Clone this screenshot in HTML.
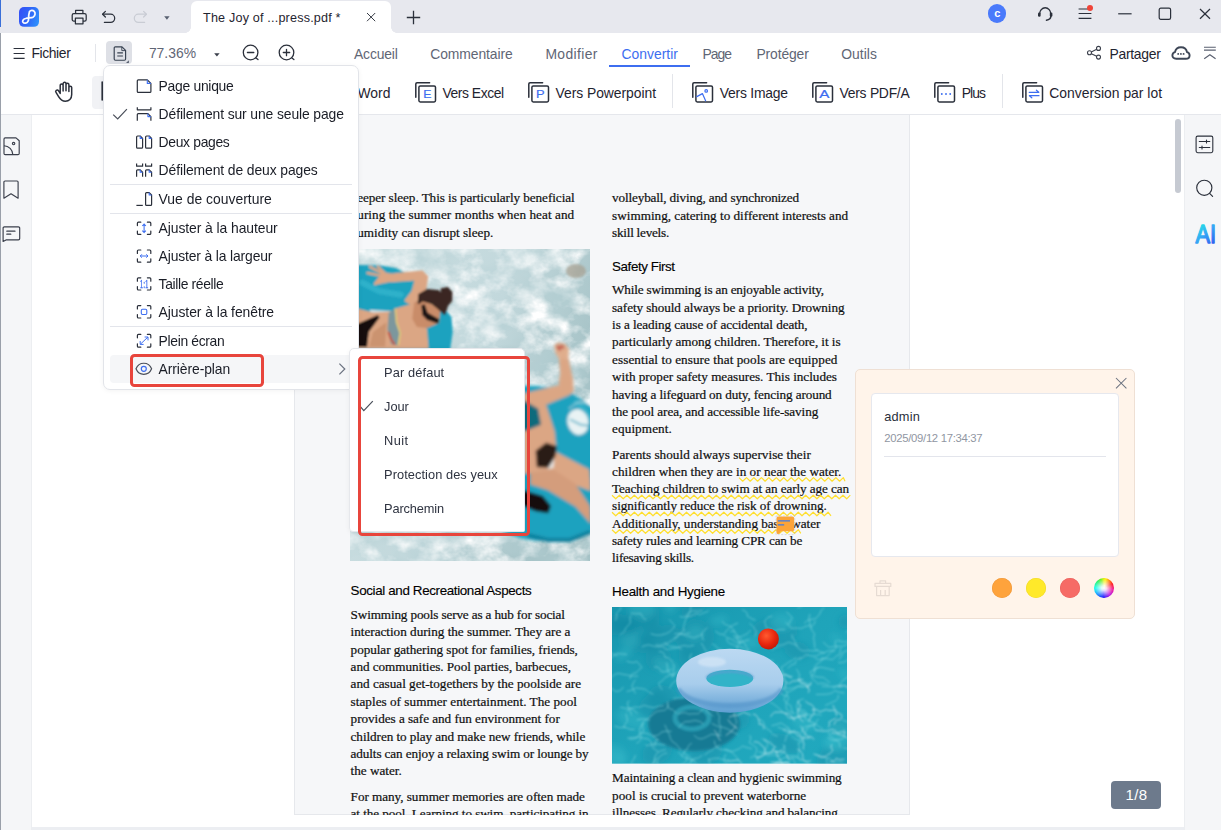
<!DOCTYPE html>
<html lang="fr"><head><meta charset="utf-8"><title>PDFelement</title>
<style>
*{box-sizing:border-box}
html,body{margin:0;padding:0}
body{width:1221px;height:832px;position:relative;overflow:hidden;background:#fff;font-family:"Liberation Sans",sans-serif}
.a{position:absolute}
.t{position:absolute;white-space:nowrap;display:block}
svg{position:absolute;overflow:visible}
.ic{fill:none;stroke:#2a2f3a;stroke-width:1.3;stroke-linecap:round;stroke-linejoin:round}
.sep{position:absolute;width:1px;background:#e3e5ea}
.mi{position:absolute;left:0;width:100%;height:28px}
.hr{position:absolute;left:7px;right:7px;height:1px;background:#e3e5eb}
</style></head>
<body>

<div class="a" id="titlebar" style="left:0;top:0;width:1221px;height:33px;background:#e7e8ee"></div>
<div class="a" style="left:0;top:0;width:1.4px;height:27px;background:#3a6fd8"></div>
<div class="a" id="tab" style="left:191px;top:0.7px;width:200px;height:32.3px;background:#fff;border-radius:6px 6px 0 0"></div>
<div class="a" style="left:185px;top:27px;width:6px;height:6px;background:radial-gradient(circle at 0 0,rgba(255,255,255,0) 5.6px,#fff 6.1px)"></div>
<div class="a" style="left:391px;top:27px;width:6px;height:6px;background:radial-gradient(circle at 100% 0,rgba(255,255,255,0) 5.6px,#fff 6.1px)"></div>
<span class="t" id="t0" style="left:203.0px;top:12.01px;font:400 12.6px/1 'Liberation Sans', sans-serif;color:#1f2430;letter-spacing:0.188px;">The Joy of ...press.pdf *</span>


<div class="a" id="menurow" style="left:0;top:33px;width:1221px;height:82px;background:#fff;border-bottom:1px solid #e5e7ec"></div>
<span class="t" id="t1" style="left:31.4px;top:47.01px;font:400 13.9px/1 'Liberation Sans', sans-serif;color:#1f2430;letter-spacing:-0.381px;">Fichier</span>
<div class="sep" style="left:95px;top:44px;height:18px"></div>
<div class="a" style="left:106px;top:41px;width:26px;height:23.4px;background:#dee0e6;border-radius:4px"></div>
<span class="t" id="t2" style="left:148.9px;top:47.01px;font:400 13.9px/1 'Liberation Sans', sans-serif;color:#5f6675;letter-spacing:-0.005px;">77.36%</span>
<span class="t" id="t3" style="left:354.0px;top:48.01px;font:400 13.9px/1 'Liberation Sans', sans-serif;color:#5f6675;letter-spacing:-0.164px;">Accueil</span>
<span class="t" id="t4" style="left:430.2px;top:48.01px;font:400 13.9px/1 'Liberation Sans', sans-serif;color:#5f6675;letter-spacing:-0.078px;">Commentaire</span>
<span class="t" id="t5" style="left:545.4px;top:48.01px;font:400 13.9px/1 'Liberation Sans', sans-serif;color:#5f6675;letter-spacing:0.385px;">Modifier</span>
<span class="t" id="t6" style="left:621.6px;top:48.01px;font:400 13.9px/1 'Liberation Sans', sans-serif;color:#3d6ef0;letter-spacing:-0.007px;">Convertir</span>
<div class="a" style="left:609px;top:65px;width:81px;height:2px;background:#3d6ef0"></div>
<span class="t" id="t7" style="left:702.5px;top:48.01px;font:400 13.9px/1 'Liberation Sans', sans-serif;color:#5f6675;letter-spacing:-0.984px;">Page</span>
<span class="t" id="t8" style="left:756.5px;top:48.01px;font:400 13.9px/1 'Liberation Sans', sans-serif;color:#5f6675;letter-spacing:-0.140px;">Protéger</span>
<span class="t" id="t9" style="left:841.3px;top:48.01px;font:400 13.9px/1 'Liberation Sans', sans-serif;color:#5f6675;letter-spacing:0.017px;">Outils</span>
<span class="t" id="t10" style="left:1109.5px;top:48.01px;font:400 13.9px/1 'Liberation Sans', sans-serif;color:#1f2430;letter-spacing:-0.283px;">Partager</span>


<div class="a" style="left:92px;top:76px;width:34px;height:33px;background:#f1f2f5;border-radius:4px"></div>
<span class="t" id="t11" style="left:325.5px;top:87.01px;font:400 13.9px/1 'Liberation Sans', sans-serif;color:#1f2430;letter-spacing:0.051px;">Vers Word</span>
<span class="t" id="t12" style="left:442.5px;top:87.01px;font:400 13.9px/1 'Liberation Sans', sans-serif;color:#1f2430;letter-spacing:-0.458px;">Vers Excel</span>
<span class="t" id="t13" style="left:555.5px;top:87.01px;font:400 13.9px/1 'Liberation Sans', sans-serif;color:#1f2430;letter-spacing:-0.047px;">Vers Powerpoint</span>
<div class="sep" style="left:672px;top:74px;height:34px"></div>
<span class="t" id="t14" style="left:719.7px;top:87.01px;font:400 13.9px/1 'Liberation Sans', sans-serif;color:#1f2430;letter-spacing:-0.218px;">Vers Image</span>
<span class="t" id="t15" style="left:839.6px;top:87.01px;font:400 13.9px/1 'Liberation Sans', sans-serif;color:#1f2430;letter-spacing:-0.274px;">Vers PDF/A</span>
<span class="t" id="t16" style="left:961.8px;top:87.01px;font:400 13.9px/1 'Liberation Sans', sans-serif;color:#1f2430;letter-spacing:-0.944px;">Plus</span>
<div class="sep" style="left:1002px;top:74px;height:34px"></div>
<span class="t" id="t17" style="left:1049.3px;top:87.01px;font:400 13.9px/1 'Liberation Sans', sans-serif;color:#1f2430;letter-spacing:-0.002px;">Conversion par lot</span>


<div class="a" id="leftbar" style="left:0;top:115px;width:32px;height:717px;background:#f5f6f8;border-right:1px solid #eceef1"></div>
<div class="a" style="left:0;top:33px;width:1px;height:799px;background:#9aa0aa"></div>
<div class="a" id="rightbar" style="left:1184px;top:115px;width:37px;height:717px;background:#f5f6f8;border-left:1px solid #eceef1"></div>
<div class="a" id="bottomstrip" style="left:32px;top:827px;width:1152px;height:5px;background:#eceef2"></div>
<div class="a" style="left:0;top:829.7px;width:1221px;height:2.3px;background:#fff"></div>
<div class="a" id="page" style="left:294px;top:115px;width:616px;height:700px;background:#f6f7f9;border:1px solid #e6e8ec;border-top:none"></div>
<div class="a" id="scroll" style="left:1175px;top:119px;width:6px;height:74px;background:#c6cad2;border-radius:3px"></div>
<div class="a" id="pgind" style="left:1111px;top:781px;width:50px;height:28px;background:#6d7a8c;border-radius:4px"></div>
<span class="t" id="t18" style="left:1125.6px;top:787.41px;font:400 15px/1 'Liberation Sans', sans-serif;color:#fff;letter-spacing:0.320px;">1/8</span>

<div class="a" id="pdfclip" style="left:294px;top:115px;width:616px;height:699.6px;overflow:hidden"><div class="a" style="left:-294px;top:-115px;width:1221px;height:832px">
<span class="t" id="t19" style="left:350.6px;top:190.61px;font:400 13.2px/1 'Liberation Serif', serif;color:#111;letter-spacing:-0.061px;-webkit-text-stroke:0.22px #111;">deeper sleep. This is particularly beneficial</span>
<span class="t" id="t20" style="left:350.6px;top:208.01px;font:400 13.2px/1 'Liberation Serif', serif;color:#111;letter-spacing:0.064px;-webkit-text-stroke:0.22px #111;">during the summer months when heat and</span>
<span class="t" id="t21" style="left:350.6px;top:225.72px;font:400 13.2px/1 'Liberation Serif', serif;color:#111;letter-spacing:-0.006px;-webkit-text-stroke:0.22px #111;">humidity can disrupt sleep.</span>
<span class="t" id="t22" style="left:350.6px;top:584.11px;font:400 13.4px/1 'Liberation Sans', sans-serif;color:#000;letter-spacing:-0.365px;-webkit-text-stroke:0.12px #000;">Social and Recreational Aspects</span>
<span class="t" id="t23" style="left:350.6px;top:608.01px;font:400 13.2px/1 'Liberation Serif', serif;color:#111;letter-spacing:-0.147px;-webkit-text-stroke:0.22px #111;">Swimming pools serve as a hub for social</span>
<span class="t" id="t24" style="left:350.6px;top:625.29px;font:400 13.2px/1 'Liberation Serif', serif;color:#111;letter-spacing:-0.019px;-webkit-text-stroke:0.22px #111;">interaction during the summer. They are a</span>
<span class="t" id="t25" style="left:350.6px;top:642.70px;font:400 13.2px/1 'Liberation Serif', serif;color:#111;letter-spacing:-0.053px;-webkit-text-stroke:0.22px #111;">popular gathering spot for families, friends,</span>
<span class="t" id="t26" style="left:350.6px;top:659.90px;font:400 13.2px/1 'Liberation Serif', serif;color:#111;letter-spacing:-0.048px;-webkit-text-stroke:0.22px #111;">and communities. Pool parties, barbecues,</span>
<span class="t" id="t27" style="left:350.6px;top:677.20px;font:400 13.2px/1 'Liberation Serif', serif;color:#111;letter-spacing:-0.007px;-webkit-text-stroke:0.22px #111;">and casual get-togethers by the poolside are</span>
<span class="t" id="t28" style="left:350.6px;top:694.60px;font:400 13.2px/1 'Liberation Serif', serif;color:#111;letter-spacing:0.026px;-webkit-text-stroke:0.22px #111;">staples of summer entertainment. The pool</span>
<span class="t" id="t29" style="left:350.6px;top:712.01px;font:400 13.2px/1 'Liberation Serif', serif;color:#111;letter-spacing:-0.046px;-webkit-text-stroke:0.22px #111;">provides a safe and fun environment for</span>
<span class="t" id="t30" style="left:350.6px;top:729.51px;font:400 13.2px/1 'Liberation Serif', serif;color:#111;letter-spacing:-0.078px;-webkit-text-stroke:0.22px #111;">children to play and make new friends, while</span>
<span class="t" id="t31" style="left:350.6px;top:746.90px;font:400 13.2px/1 'Liberation Serif', serif;color:#111;letter-spacing:-0.116px;-webkit-text-stroke:0.22px #111;">adults can enjoy a relaxing swim or lounge by</span>
<span class="t" id="t32" style="left:350.6px;top:764.01px;font:400 13.2px/1 'Liberation Serif', serif;color:#111;letter-spacing:-0.007px;-webkit-text-stroke:0.22px #111;">the water.</span>
<span class="t" id="t33" style="left:350.6px;top:789.51px;font:400 13.2px/1 'Liberation Serif', serif;color:#111;letter-spacing:-0.046px;-webkit-text-stroke:0.22px #111;">For many, summer memories are often made</span>
<span class="t" id="t34" style="left:350.6px;top:806.70px;font:400 13.2px/1 'Liberation Serif', serif;color:#111;letter-spacing:-0.087px;-webkit-text-stroke:0.22px #111;">at the pool. Learning to swim, participating in</span>
<span class="t" id="t35" style="left:612.1px;top:191.01px;font:400 13.2px/1 'Liberation Serif', serif;color:#111;letter-spacing:-0.151px;-webkit-text-stroke:0.22px #111;">volleyball, diving, and synchronized</span>
<span class="t" id="t36" style="left:612.1px;top:208.51px;font:400 13.2px/1 'Liberation Serif', serif;color:#111;letter-spacing:-0.008px;-webkit-text-stroke:0.22px #111;">swimming, catering to different interests and</span>
<span class="t" id="t37" style="left:612.1px;top:225.72px;font:400 13.2px/1 'Liberation Serif', serif;color:#111;letter-spacing:-0.248px;-webkit-text-stroke:0.22px #111;">skill levels.</span>
<span class="t" id="t38" style="left:612.1px;top:259.80px;font:400 13.4px/1 'Liberation Sans', sans-serif;color:#000;letter-spacing:-0.438px;-webkit-text-stroke:0.12px #000;">Safety First</span>
<span class="t" id="t39" style="left:612.1px;top:282.60px;font:400 13.2px/1 'Liberation Serif', serif;color:#111;letter-spacing:-0.179px;-webkit-text-stroke:0.22px #111;">While swimming is an enjoyable activity,</span>
<span class="t" id="t40" style="left:612.1px;top:300.51px;font:400 13.2px/1 'Liberation Serif', serif;color:#111;letter-spacing:-0.103px;-webkit-text-stroke:0.22px #111;">safety should always be a priority. Drowning</span>
<span class="t" id="t41" style="left:612.1px;top:318.01px;font:400 13.2px/1 'Liberation Serif', serif;color:#111;letter-spacing:-0.088px;-webkit-text-stroke:0.22px #111;">is a leading cause of accidental death,</span>
<span class="t" id="t42" style="left:612.1px;top:335.30px;font:400 13.2px/1 'Liberation Serif', serif;color:#111;letter-spacing:-0.053px;-webkit-text-stroke:0.22px #111;">particularly among children. Therefore, it is</span>
<span class="t" id="t43" style="left:612.1px;top:352.80px;font:400 13.2px/1 'Liberation Serif', serif;color:#111;letter-spacing:0.063px;-webkit-text-stroke:0.22px #111;">essential to ensure that pools are equipped</span>
<span class="t" id="t44" style="left:612.1px;top:370.30px;font:400 13.2px/1 'Liberation Serif', serif;color:#111;letter-spacing:-0.011px;-webkit-text-stroke:0.22px #111;">with proper safety measures. This includes</span>
<span class="t" id="t45" style="left:612.1px;top:387.60px;font:400 13.2px/1 'Liberation Serif', serif;color:#111;letter-spacing:-0.116px;-webkit-text-stroke:0.22px #111;">having a lifeguard on duty, fencing around</span>
<span class="t" id="t46" style="left:612.1px;top:405.01px;font:400 13.2px/1 'Liberation Serif', serif;color:#111;letter-spacing:-0.100px;-webkit-text-stroke:0.22px #111;">the pool area, and accessible life-saving</span>
<span class="t" id="t47" style="left:612.1px;top:422.22px;font:400 13.2px/1 'Liberation Serif', serif;color:#111;letter-spacing:0.081px;-webkit-text-stroke:0.22px #111;">equipment.</span>
<span class="t" id="t48" style="left:612.1px;top:447.60px;font:400 13.2px/1 'Liberation Serif', serif;color:#111;letter-spacing:0.026px;-webkit-text-stroke:0.22px #111;">Parents should always supervise their</span>
<span class="t" id="t49" style="left:612.1px;top:465.01px;font:400 13.2px/1 'Liberation Serif', serif;color:#111;letter-spacing:0.008px;-webkit-text-stroke:0.22px #111;">children when they are in or near the water.</span>
<span class="t" id="t50" style="left:612.1px;top:482.22px;font:400 13.2px/1 'Liberation Serif', serif;color:#111;letter-spacing:-0.104px;-webkit-text-stroke:0.22px #111;">Teaching children to swim at an early age can</span>
<span class="t" id="t51" style="left:612.1px;top:499.42px;font:400 13.2px/1 'Liberation Serif', serif;color:#111;letter-spacing:-0.087px;-webkit-text-stroke:0.22px #111;">significantly reduce the risk of drowning.</span>
<span class="t" id="t52" style="left:612.1px;top:516.70px;font:400 13.2px/1 'Liberation Serif', serif;color:#111;letter-spacing:-0.047px;-webkit-text-stroke:0.22px #111;">Additionally, understanding basic water</span>
<span class="t" id="t53" style="left:612.1px;top:534.10px;font:400 13.2px/1 'Liberation Serif', serif;color:#111;letter-spacing:-0.132px;-webkit-text-stroke:0.22px #111;">safety rules and learning CPR can be</span>
<span class="t" id="t54" style="left:612.1px;top:551.29px;font:400 13.2px/1 'Liberation Serif', serif;color:#111;letter-spacing:-0.262px;-webkit-text-stroke:0.22px #111;">lifesaving skills.</span>
<span class="t" id="t55" style="left:612.1px;top:585.30px;font:400 13.4px/1 'Liberation Sans', sans-serif;color:#000;letter-spacing:-0.266px;-webkit-text-stroke:0.12px #000;">Health and Hygiene</span>
<span class="t" id="t56" style="left:612.1px;top:771.40px;font:400 13.2px/1 'Liberation Serif', serif;color:#111;letter-spacing:-0.129px;-webkit-text-stroke:0.22px #111;">Maintaining a clean and hygienic swimming</span>
<span class="t" id="t57" style="left:612.1px;top:788.79px;font:400 13.2px/1 'Liberation Serif', serif;color:#111;letter-spacing:0.008px;-webkit-text-stroke:0.22px #111;">pool is crucial to prevent waterborne</span>
<span class="t" id="t58" style="left:612.1px;top:806.20px;font:400 13.2px/1 'Liberation Serif', serif;color:#111;letter-spacing:-0.126px;-webkit-text-stroke:0.22px #111;">illnesses. Regularly checking and balancing</span>
<svg style="left:0;top:0" width="1221" height="832" viewBox="0 0 1221 832"><g fill="none" stroke="#ffdf2e" stroke-width="1.2" stroke-linejoin="round"><path d="M739.0 477.60 L742.7 481.20 L746.5 477.60 L750.2 481.20 L753.9 477.60 L757.6 481.20 L761.4 477.60 L765.1 481.20 L768.8 477.60 L772.5 481.20 L776.3 477.60 L780.0 481.20 L783.7 477.60 L787.4 481.20 L791.2 477.60 L794.9 481.20 L798.6 477.60 L802.3 481.20 L806.1 477.60 L809.8 481.20 L813.5 477.60 L817.2 481.20 L821.0 477.60 L824.7 481.20 L828.4 477.60 L832.1 481.20 L835.9 477.60 L839.6 481.20 L843.3 477.60 L845.0 481.20"/><path d="M612.0 495.20 L615.7 498.80 L619.5 495.20 L623.2 498.80 L626.9 495.20 L630.6 498.80 L634.4 495.20 L638.1 498.80 L641.8 495.20 L645.5 498.80 L649.3 495.20 L653.0 498.80 L656.7 495.20 L660.4 498.80 L664.2 495.20 L667.9 498.80 L671.6 495.20 L675.3 498.80 L679.1 495.20 L682.8 498.80 L686.5 495.20 L690.2 498.80 L694.0 495.20 L697.7 498.80 L701.4 495.20 L705.1 498.80 L708.9 495.20 L712.6 498.80 L716.3 495.20 L720.0 498.80 L723.8 495.20 L727.5 498.80 L731.2 495.20 L734.9 498.80 L738.7 495.20 L742.4 498.80 L746.1 495.20 L749.8 498.80 L753.6 495.20 L757.3 498.80 L761.0 495.20 L764.7 498.80 L768.5 495.20 L772.2 498.80 L775.9 495.20 L779.6 498.80 L783.4 495.20 L787.1 498.80 L790.8 495.20 L794.5 498.80 L798.3 495.20 L802.0 498.80 L805.7 495.20 L809.4 498.80 L813.2 495.20 L816.9 498.80 L820.6 495.20 L824.3 498.80 L828.1 495.20 L831.8 498.80 L835.5 495.20 L839.2 498.80 L843.0 495.20 L846.7 498.80 L850.3 495.20"/><path d="M612.0 512.20 L615.7 515.80 L619.5 512.20 L623.2 515.80 L626.9 512.20 L630.6 515.80 L634.4 512.20 L638.1 515.80 L641.8 512.20 L645.5 515.80 L649.3 512.20 L653.0 515.80 L656.7 512.20 L660.4 515.80 L664.2 512.20 L667.9 515.80 L671.6 512.20 L675.3 515.80 L679.1 512.20 L682.8 515.80 L686.5 512.20 L690.2 515.80 L694.0 512.20 L697.7 515.80 L701.4 512.20 L705.1 515.80 L708.9 512.20 L712.6 515.80 L716.3 512.20 L720.0 515.80 L723.8 512.20 L727.5 515.80 L731.2 512.20 L734.9 515.80 L738.7 512.20 L742.4 515.80 L746.1 512.20 L749.8 515.80 L753.6 512.20 L757.3 515.80 L761.0 512.20 L764.7 515.80 L768.5 512.20 L772.2 515.80 L775.9 512.20 L779.6 515.80 L783.4 512.20 L787.1 515.80 L790.8 512.20 L794.5 515.80 L798.3 512.20 L802.0 515.80 L805.7 512.20 L809.4 515.80 L813.2 512.20 L816.9 515.80 L820.6 512.20 L824.3 515.80 L828.1 512.20 L831.0 515.80"/><path d="M612.0 529.70 L615.7 533.30 L619.5 529.70 L623.2 533.30 L626.9 529.70 L630.6 533.30 L634.4 529.70 L638.1 533.30 L641.8 529.70 L645.5 533.30 L649.3 529.70 L653.0 533.30 L656.7 529.70 L660.4 533.30 L664.2 529.70 L667.9 533.30 L671.6 529.70 L675.3 533.30 L679.1 529.70 L682.8 533.30 L686.5 529.70 L690.2 533.30 L694.0 529.70 L697.7 533.30 L701.4 529.70 L705.1 533.30 L708.9 529.70 L712.6 533.30 L716.3 529.70 L720.0 533.30 L723.8 529.70 L727.5 533.30 L731.2 529.70 L734.9 533.30 L738.7 529.70 L742.4 533.30 L746.1 529.70 L749.8 533.30 L753.6 529.70 L757.3 533.30 L761.0 529.70 L764.7 533.30 L768.5 529.70 L772.2 533.30 L775.9 529.70 L779.6 533.30 L783.4 529.70 L787.1 533.30 L790.8 529.70 L794.5 533.30 L798.3 529.70 L800.8 533.30"/></g></svg>
<svg id="img1" style="left:350px;top:249px" width="240" height="312" viewBox="0 0 240 312">
<defs><filter id="b1" x="-20%" y="-20%" width="140%" height="140%"><feGaussianBlur stdDeviation="1.1"/></filter>
<filter id="b3" x="-20%" y="-20%" width="140%" height="140%"><feGaussianBlur stdDeviation="3.5"/></filter>
<filter id="foam" x="0" y="0" width="100%" height="100%"><feTurbulence type="fractalNoise" baseFrequency="0.04 0.05" numOctaves="4" seed="7" result="n"/><feColorMatrix in="n" type="matrix" values="0 0 0 0 1  0 0 0 0 1  0 0 0 0 1  2.6 0 0 0 -1.0"/></filter>
<filter id="dark1" x="0" y="0" width="100%" height="100%"><feTurbulence type="fractalNoise" baseFrequency="0.02 0.03" numOctaves="3" seed="23" result="n"/><feColorMatrix in="n" type="matrix" values="0 0 0 0 0.45  0 0 0 0 0.62  0 0 0 0 0.65  0 1.8 0 0 -0.78"/></filter>
<clipPath id="c1"><rect x="0" y="0" width="240" height="312"/></clipPath>
<linearGradient id="w1" x1="0" y1="0" x2="1" y2="0.4"><stop offset="0" stop-color="#cfe1e3"/><stop offset="0.6" stop-color="#c2d8dc"/><stop offset="1" stop-color="#a5c2c6"/></linearGradient></defs>
<g clip-path="url(#c1)">
<rect width="240" height="312" fill="url(#w1)"/>
<rect width="240" height="312" filter="url(#foam)"/>
<rect width="240" height="312" filter="url(#dark1)"/>
<ellipse cx="226" cy="22" rx="10" ry="7" fill="#a9a598" opacity=".8" filter="url(#b1)"/>
<g filter="url(#b1)">
<!-- float 1 -->
<path d="M0.2 17.4 L29.0 17.8 L44.7 20.4 L61.5 28.8 L72.3 37.3 L81.9 45.7 L91.6 58.9 L100.0 68.5 L101.2 82.9 L98.8 99.8 L0.2 99.8 Z" fill="#1da2bf" stroke="#1da2bf" stroke-width="3" stroke-linejoin="round"/>
<path d="M12.2 33.7 L29.0 42.1 L50.7 45.7" fill="none" stroke="#45c4d8" stroke-width="6" opacity=".45" stroke-linecap="round"/>
<path d="M19.4 60.7 L41.1 61.9 L38.7 68.5 L21.8 66.1 Z" fill="#cfe1e4"/>
<!-- thigh/torso -->
<path d="M0.2 57.7 L23.0 63.5 L41.1 62.5 L47.1 58.9 L65.1 54.1 L67.5 62.5 L77.1 80.5 L78.6 99.8 L0.2 99.8 Z" fill="#dba684"/>
<path d="M23.0 82.9 L36.3 73.3 L35.1 97.4 L19.4 97.4 Z" fill="#c58b66" opacity=".7"/>
<path d="M0.2 78.1 L27.8 66.1 L29.6 68.5 L18.8 82.9 L17.0 98.0 L0.2 98.0 Z" fill="#15110f"/>
<path d="M38.7 63.7 L45.9 58.9 L47.3 73.3 L50.9 84.1 L48.5 96.4 L41.1 95.2 L37.5 80.5 Z" fill="#7c979d"/>
<path d="M45.4 59.5 L46.6 73.3 L50.2 84.1 L48.3 96.2" fill="none" stroke="#e9cf74" stroke-width="1.5"/>
<path d="M38.4 82.9 L41.1 90.2 L44.7 95.6" fill="none" stroke="#c5513e" stroke-width="2"/>
<!-- arm -->
<path d="M39.9 25.8 L56.7 24.0 L72.3 22.6 L77.1 27.6 L75.3 40.9 L69.9 49.3 L61.5 55.3 L55.5 51.7 L62.7 42.1 L65.7 30.6 L41.1 32.2 Z" fill="#dba684" stroke="#dba684" stroke-width="2" stroke-linejoin="round"/>
<path d="M24.8 34.9 L41.1 31.8 L41.1 25.8 L32.7 24.0 Z" fill="#dba684" stroke="#dba684" stroke-width="2" stroke-linejoin="round"/>
<path d="M33.9 25.2 L20.0 18.0 M32.7 27.0 L17.6 24.0 M34.5 24.0 L27.8 17.8 M35.1 30.6 L25.4 34.6" fill="none" stroke="#dba684" stroke-width="2.6" stroke-linecap="round"/>
<!-- head -->
<path d="M65.1 54.1 L72.3 51.1 L89.2 60.1 L88.2 73.3 L77.1 78.1 L67.5 76.9 L63.3 69.7 Z" fill="#c98c69" stroke="#c98c69" stroke-width="2" stroke-linejoin="round"/>
<path d="M69.3 45.7 L77.1 41.1 L88.0 42.1 L92.2 45.7 L91.6 40.3 L97.6 39.1 L101.4 43.3 L101.2 51.7 L97.0 56.5 L94.6 64.9 L89.2 60.1 L81.9 54.1 L72.3 51.4 L68.7 54.1 Z" fill="#3a2822" stroke="#3a2822" stroke-width="2" stroke-linejoin="round"/>
<path d="M71.4 56.3 L74.7 55.3 L77.7 63.7 L89.2 70.3 L88.2 74.8 L77.1 70.9 L72.3 66.1 Z" fill="#1a1513"/>
<!-- woman 2 + float 2 -->
<g filter="url(#b1)">
<path d="M118 160 C132 146 150 139 172 137 C190 136 204 138 220 144 C232 150 240 156 246 164 L246 280 C232 288 214 292 196 292 C170 292 150 284 138 270 C116 244 106 196 118 160 Z" fill="#1da2bf"/>
<path d="M178.3 286.2 L197.7 290.9 L219.8 290.9 L240.9 282.6" fill="none" stroke="#0f7f9c" stroke-width="4"/>
<path d="M225.3 153.2 L234.5 159.8 L241.2 170.4" fill="none" stroke="#4cc4d6" stroke-width="4" opacity=".45" stroke-linecap="round"/>
<!-- logo -->
<ellipse cx="228" cy="173" rx="10.5" ry="13" fill="#e9f3f4" transform="rotate(-14 228 173)"/>
<path d="M220.0 170.4 L230.6 175.7 L240.5 177.0" fill="none" stroke="#1da2bf" stroke-width="1.6"/>
<path d="M218.7 159.8 L227.9 153.2 L239.8 154.5" fill="none" stroke="#e9f3f4" stroke-width="1" opacity=".8"/>
<!-- torso -->
<path d="M164.5 146.4 L192.1 143.6 L204.6 182.3 L206.5 201.7 L203.2 221.1 L181.1 224.4 L164.5 223.9 Z" fill="#dba684"/>
<path d="M167.1 149.2 L175.0 151.9 L188.2 159.8 L191.1 175.7 L175.0 182.3 L167.1 182.3 Z" fill="#116a7c"/>
<!-- arm -->
<path d="M169.7 147.2 L180.3 143.9 L209.4 137.3 L221.3 135.7 L222.9 141.3 L218.7 145.3 L189.6 157.2 L182.9 153.9 Z" fill="#dba684" stroke="#dba684" stroke-width="2" stroke-linejoin="round"/>
<path d="M209.9 108.9 L217.3 108.9 L222.1 130.7 L222.4 140.2 L214.7 140.8 L209.7 134.7 L211.3 124.1 Z" fill="#dba684" stroke="#dba684" stroke-width="2" stroke-linejoin="round"/>
<path d="M205.2 96.6 L208.3 94.6 L214.7 95.8 L217.9 100.3 L217.3 109.3 L209.9 109.3 L206.2 103.2 Z" fill="#e0ad8c" stroke="#e0ad8c" stroke-width="2" stroke-linejoin="round"/>
<path d="M207.8 97.6 L209.7 100.5 M211.0 97.1 L213.1 98.4" stroke="#b01f24" stroke-width="2.2" stroke-linecap="round" fill="none"/>
<!-- legs -->
<path d="M202.7 201.2 L239.2 220.6 L240.9 241.9 L222.6 235.5 L202.7 221.1 Z" fill="#dba684"/>
<path d="M180.5 223.9 L203.2 220.6 L225.4 234.9 L239.8 257.1 L240.9 275.1 L225.4 257.6 L197.7 241.0 L180.5 235.5 Z" fill="#d49d7b"/>
<path d="M197.1 206.7 L204.9 205.3 L203.5 218.9 L197.7 220.0 Z" fill="#e8e4e0"/>
<path d="M186.6 202.3 L196.3 194.8 L206.0 197.9 L204.3 207.3 L197.7 217.8 L187.7 217.2 Z" fill="#2a1b18" stroke="#2a1b18" stroke-width="2" stroke-linejoin="round"/>
<path d="M172.8 241.9 L192.1 247.7 L199.9 257.1 L197.7 263.2 L186.6 261.5 L172.8 256.0 Z" fill="#15100f" stroke="#15100f" stroke-width="2" stroke-linejoin="round"/>
</g>
</g></svg>
<svg id="img2" style="left:612.1px;top:607.1px" width="235" height="156.8" viewBox="0 0 235 156.8">
<defs><filter id="b2" x="-20%" y="-20%" width="140%" height="140%"><feGaussianBlur stdDeviation="0.8"/></filter>
<filter id="b4" x="-30%" y="-30%" width="160%" height="160%"><feGaussianBlur stdDeviation="3"/></filter>
<filter id="b5" x="-30%" y="-30%" width="160%" height="160%"><feGaussianBlur stdDeviation="1.4"/></filter><clipPath id="c2"><rect x="0" y="0" width="235" height="156.8"/></clipPath>
<linearGradient id="w2" x1="0" y1="0" x2="1" y2="1"><stop offset="0" stop-color="#1796ae"/><stop offset="0.5" stop-color="#1fa4ba"/><stop offset="1" stop-color="#21a9bf"/></linearGradient>
<linearGradient id="rg" x1="0" y1="0" x2="0" y2="1"><stop offset="0" stop-color="#bcd9f2"/><stop offset="0.55" stop-color="#a8cdec"/><stop offset="1" stop-color="#5e9fd2"/></linearGradient>
<radialGradient id="bg" cx="0.4" cy="0.35" r="0.7"><stop offset="0" stop-color="#ff5a30"/><stop offset="0.6" stop-color="#e8260e"/><stop offset="1" stop-color="#c01808"/></radialGradient></defs>
<g clip-path="url(#c2)">
<rect width="235" height="156.8" fill="url(#w2)"/>
<g filter="url(#b4)"><g fill="#138aa3" fill-opacity="0.35"><ellipse cx="2.9" cy="17.6" rx="13.5" ry="10.0" transform="rotate(-29 2.9 17.6)"/><ellipse cx="26.4" cy="36.4" rx="18.6" ry="8.8" transform="rotate(19 26.4 36.4)"/><ellipse cx="155.6" cy="21.4" rx="15.5" ry="9.7" transform="rotate(-7 155.6 21.4)"/><ellipse cx="234.1" cy="14.6" rx="8.3" ry="7.2" transform="rotate(-8 234.1 14.6)"/><ellipse cx="46.6" cy="51.9" rx="13.1" ry="11.5" transform="rotate(-23 46.6 51.9)"/><ellipse cx="51.0" cy="91.8" rx="15.7" ry="13.7" transform="rotate(27 51.0 91.8)"/><ellipse cx="83.5" cy="32.0" rx="19.7" ry="17.6" transform="rotate(-38 83.5 32.0)"/><ellipse cx="172.7" cy="136.3" rx="17.1" ry="8.7" transform="rotate(24 172.7 136.3)"/><ellipse cx="171.5" cy="30.4" rx="17.0" ry="8.6" transform="rotate(-37 171.5 30.4)"/><ellipse cx="79.0" cy="52.5" rx="13.5" ry="9.8" transform="rotate(27 79.0 52.5)"/><ellipse cx="225.9" cy="153.3" rx="21.9" ry="17.4" transform="rotate(-15 225.9 153.3)"/><ellipse cx="41.4" cy="97.9" rx="15.6" ry="11.5" transform="rotate(-33 41.4 97.9)"/><ellipse cx="45.3" cy="144.6" rx="16.4" ry="12.3" transform="rotate(-32 45.3 144.6)"/><ellipse cx="93.8" cy="142.9" rx="17.1" ry="15.3" transform="rotate(-24 93.8 142.9)"/><ellipse cx="106.9" cy="125.7" rx="14.2" ry="11.3" transform="rotate(5 106.9 125.7)"/><ellipse cx="27.7" cy="15.5" rx="21.8" ry="10.0" transform="rotate(-24 27.7 15.5)"/><ellipse cx="78.8" cy="112.0" rx="20.0" ry="12.7" transform="rotate(-0 78.8 112.0)"/><ellipse cx="185.3" cy="43.6" rx="13.2" ry="9.3" transform="rotate(11 185.3 43.6)"/><ellipse cx="8.9" cy="17.6" rx="9.9" ry="7.6" transform="rotate(15 8.9 17.6)"/><ellipse cx="228.7" cy="120.5" rx="11.6" ry="9.1" transform="rotate(39 228.7 120.5)"/><ellipse cx="81.9" cy="1.8" rx="13.3" ry="7.2" transform="rotate(-26 81.9 1.8)"/><ellipse cx="10.6" cy="19.6" rx="20.1" ry="8.5" transform="rotate(9 10.6 19.6)"/><ellipse cx="48.5" cy="30.4" rx="19.5" ry="10.7" transform="rotate(-25 48.5 30.4)"/><ellipse cx="106.9" cy="109.1" rx="15.3" ry="12.7" transform="rotate(-8 106.9 109.1)"/><ellipse cx="123.1" cy="112.6" rx="14.5" ry="11.0" transform="rotate(-3 123.1 112.6)"/><ellipse cx="31.4" cy="19.4" rx="19.0" ry="14.6" transform="rotate(35 31.4 19.4)"/></g><g fill="#43c3d2" fill-opacity="0.3"><ellipse cx="18.2" cy="33.5" rx="9.0" ry="7.7" transform="rotate(-0 18.2 33.5)"/><ellipse cx="169.3" cy="15.7" rx="11.1" ry="9.1" transform="rotate(2 169.3 15.7)"/><ellipse cx="222.0" cy="138.4" rx="9.7" ry="3.9" transform="rotate(20 222.0 138.4)"/><ellipse cx="29.7" cy="1.5" rx="13.3" ry="10.9" transform="rotate(27 29.7 1.5)"/><ellipse cx="224.1" cy="31.7" rx="6.8" ry="3.1" transform="rotate(38 224.1 31.7)"/><ellipse cx="26.3" cy="25.0" rx="6.2" ry="2.6" transform="rotate(-37 26.3 25.0)"/><ellipse cx="83.0" cy="25.6" rx="9.1" ry="7.9" transform="rotate(-27 83.0 25.6)"/><ellipse cx="191.4" cy="115.9" rx="11.7" ry="8.0" transform="rotate(22 191.4 115.9)"/><ellipse cx="138.0" cy="36.0" rx="9.3" ry="4.9" transform="rotate(-8 138.0 36.0)"/><ellipse cx="232.0" cy="67.0" rx="6.7" ry="4.3" transform="rotate(25 232.0 67.0)"/><ellipse cx="104.7" cy="110.3" rx="6.9" ry="3.0" transform="rotate(13 104.7 110.3)"/><ellipse cx="11.3" cy="47.4" rx="9.8" ry="4.9" transform="rotate(-37 11.3 47.4)"/><ellipse cx="1.6" cy="149.4" rx="12.9" ry="11.3" transform="rotate(-1 1.6 149.4)"/><ellipse cx="224.3" cy="135.4" rx="12.2" ry="8.1" transform="rotate(1 224.3 135.4)"/><ellipse cx="53.0" cy="59.1" rx="13.2" ry="6.6" transform="rotate(28 53.0 59.1)"/><ellipse cx="119.8" cy="94.9" rx="14.2" ry="10.3" transform="rotate(-29 119.8 94.9)"/><ellipse cx="58.2" cy="0.2" rx="6.3" ry="5.5" transform="rotate(7 58.2 0.2)"/><ellipse cx="227.7" cy="122.5" rx="9.2" ry="8.1" transform="rotate(34 227.7 122.5)"/><ellipse cx="107.2" cy="13.1" rx="9.2" ry="4.4" transform="rotate(-11 107.2 13.1)"/><ellipse cx="19.4" cy="112.0" rx="15.8" ry="8.0" transform="rotate(22 19.4 112.0)"/><ellipse cx="137.3" cy="75.8" rx="15.1" ry="8.9" transform="rotate(26 137.3 75.8)"/><ellipse cx="8.2" cy="151.6" rx="7.8" ry="3.1" transform="rotate(31 8.2 151.6)"/></g></g>
<ellipse cx="82" cy="117" rx="46" ry="27" fill="#137a94" filter="url(#b5)"/>
<ellipse cx="80" cy="111" rx="17" ry="11" fill="none" stroke="#2fa6bb" stroke-width="5" filter="url(#b2)" opacity=".75"/>
<g filter="url(#b2)"><g fill="none" stroke="#9fe6ea" stroke-opacity="0.55" stroke-width="0.9" stroke-linecap="round"><path d="M89.5 36.2 Q92.7 41.3 92.9 42.8 Q97.8 47.3 98.7 48.5 Q99.3 55.5 98.1 55.5"/><path d="M103.3 24.3 Q107.0 27.9 112.0 27.7 Q114.3 31.5 119.6 32.3 Q123.4 36.3 128.1 35.9 Q132.6 33.5 137.0 32.7"/><path d="M130.5 2.9 Q136.2 4.6 135.3 9.1 Q140.8 12.7 143.3 13.2"/><path d="M42.8 139.4 Q42.6 132.3 46.4 132.8 Q43.1 131.5 39.3 127.9 Q30.9 124.6 29.4 126.9"/><path d="M222.2 63.1 Q218.8 62.5 212.7 61.0 Q204.6 59.1 202.8 61.9 Q203.0 68.9 199.5 68.5"/><path d="M176.6 17.2 Q178.3 13.8 180.3 10.7 Q177.1 7.2 174.6 4.9"/><path d="M23.4 148.4 Q22.3 152.5 19.7 154.9 Q21.0 158.4 17.2 161.7 Q20.8 164.9 21.4 168.0"/><path d="M210.9 51.1 Q215.5 51.9 220.7 52.6 Q225.2 47.4 227.7 47.7 Q228.3 41.2 228.9 40.7"/><path d="M232.1 86.0 Q224.9 85.3 222.8 83.5 Q220.7 86.7 214.3 87.2 Q208.6 87.4 204.3 87.5"/><path d="M228.1 140.3 Q227.5 133.5 225.0 133.7 Q219.6 134.2 215.8 130.8"/><path d="M96.6 152.7 Q103.1 150.7 106.4 151.2 Q114.8 154.7 116.2 152.7"/><path d="M72.3 23.8 Q70.1 20.1 72.4 16.8 Q73.7 11.5 75.3 10.1 Q79.1 2.9 78.1 3.4 Q79.0 -1.6 80.1 -3.4"/><path d="M212.3 45.8 Q209.1 45.6 203.7 49.3 Q199.2 49.3 194.0 47.6 Q191.8 49.6 187.7 53.0"/><path d="M188.7 50.6 Q182.6 52.9 183.4 56.6 Q178.4 57.1 176.0 61.2"/><path d="M138.7 58.9 Q137.9 63.9 136.8 65.8 Q140.6 67.6 140.9 72.2 Q145.4 73.6 148.3 76.9"/><path d="M15.0 84.5 Q20.1 83.5 23.7 81.0 Q31.7 81.7 33.5 82.5 Q35.6 85.1 41.0 87.1"/><path d="M15.7 131.1 Q22.9 130.5 25.6 130.1 Q26.7 125.5 31.7 124.5 Q30.4 118.2 30.0 117.6 Q31.9 111.4 37.4 112.9"/><path d="M72.4 145.0 Q76.4 152.7 75.1 151.7 Q72.7 158.1 69.1 157.4"/><path d="M214.9 151.3 Q214.1 158.6 217.0 158.2 Q218.8 165.3 219.7 164.9 Q220.1 170.8 222.8 171.6"/><path d="M125.1 42.8 Q124.4 36.7 128.7 36.2 Q126.7 31.4 122.1 30.9"/><path d="M66.6 145.4 Q72.6 152.2 73.2 150.7 Q78.2 152.9 82.4 153.4 Q82.7 158.5 87.8 159.3"/><path d="M54.9 145.9 Q51.1 146.1 47.0 150.1 Q44.6 154.2 45.0 157.0 Q47.8 158.7 50.5 162.8 Q55.7 169.5 54.6 169.2"/><path d="M146.2 154.1 Q145.0 149.8 142.6 147.6 Q146.0 145.0 144.5 140.7 Q141.8 138.4 137.4 135.8 Q140.4 128.3 137.6 128.8"/><path d="M160.3 43.1 Q161.9 40.4 167.7 38.3 Q170.6 38.6 176.6 35.2 Q184.1 37.9 185.4 38.6"/><path d="M90.5 73.9 Q87.0 73.0 80.6 72.5 Q75.9 70.2 70.9 71.0 Q68.6 72.2 62.3 74.6 Q59.5 76.5 57.7 80.8"/><path d="M123.1 25.2 Q122.6 23.4 118.3 19.0 Q112.1 18.2 110.5 14.7"/><path d="M30.3 39.6 Q36.2 36.6 40.2 38.9 Q48.8 40.7 50.2 39.1 Q53.3 43.9 59.5 41.7 Q68.2 39.8 69.5 42.1"/><path d="M70.3 148.8 Q71.6 142.7 75.1 142.7 Q76.4 137.2 79.4 136.4"/><path d="M199.0 78.1 Q194.1 75.2 189.5 75.7 Q185.6 68.7 187.8 68.9 Q185.5 62.1 184.5 62.3"/><path d="M113.5 147.6 Q110.8 151.3 112.8 154.6 Q114.2 157.9 117.7 160.7"/><path d="M221.0 80.9 Q227.7 78.9 228.5 76.3 Q229.6 73.5 234.7 70.8 Q239.5 67.3 240.2 64.9 Q239.6 60.4 237.8 58.1"/><path d="M22.1 122.6 Q18.5 123.6 12.7 120.1 Q8.0 121.8 2.8 119.2"/><path d="M68.2 62.3 Q66.8 64.3 61.9 67.7 Q57.3 67.1 52.9 70.8 Q51.1 74.0 46.5 76.2 Q48.4 81.1 50.0 82.7"/><path d="M110.3 66.1 Q113.9 64.2 119.9 64.0 Q123.7 59.3 123.2 57.4 Q117.0 52.8 116.0 52.6 Q109.4 56.1 106.4 54.6"/><path d="M159.8 81.8 Q162.5 75.8 161.0 74.8 Q168.6 74.5 169.2 70.8 Q167.7 66.2 171.6 64.0"/><path d="M3.6 13.2 Q5.4 9.6 4.5 6.2 Q10.0 1.6 8.7 -0.1"/><path d="M93.0 83.9 Q91.6 86.9 91.0 90.7 Q95.9 92.8 95.7 96.9 Q97.2 101.2 94.3 103.8 Q95.6 105.1 101.0 109.0"/><path d="M231.5 131.5 Q222.9 134.2 221.5 131.5 Q217.0 129.4 216.3 125.5"/><path d="M82.2 128.4 Q86.5 133.4 91.4 131.3 Q95.9 129.3 99.5 127.2 Q105.4 127.8 109.3 128.7"/><path d="M46.0 144.2 Q39.6 141.5 40.2 138.5 Q39.4 134.6 36.4 132.0 Q29.2 131.1 26.9 129.8 Q22.2 133.1 17.5 132.1"/><path d="M39.0 26.8 Q43.5 28.8 48.8 28.1 Q55.6 26.6 57.6 24.8 Q60.9 22.5 62.9 18.8 Q60.5 16.1 57.5 12.9"/><path d="M227.1 52.2 Q230.8 48.0 230.4 45.6 Q233.3 43.4 239.8 43.2 Q244.7 40.0 245.1 37.2"/><path d="M231.0 113.2 Q238.5 116.6 240.8 114.6 Q246.6 113.6 250.0 117.3 Q251.6 121.1 253.0 124.0 Q252.7 130.6 255.6 130.7"/><path d="M44.5 156.3 Q46.5 162.1 50.5 161.9 Q52.6 168.9 50.2 168.8 Q45.5 174.1 43.5 174.0"/><path d="M179.7 129.1 Q184.2 133.9 188.2 132.8 Q185.3 137.5 187.6 139.8 Q188.3 141.9 186.5 146.8 Q184.9 150.9 188.4 153.6"/><path d="M25.8 69.2 Q20.3 69.6 15.9 68.2 Q9.6 67.1 6.3 66.3 Q2.5 66.8 -1.5 70.7 Q-4.1 78.4 -1.6 77.7"/><path d="M213.5 98.3 Q219.8 95.4 222.0 94.6 Q227.0 92.6 226.3 88.3"/><path d="M53.5 142.7 Q48.6 143.1 44.9 146.2 Q41.2 152.3 42.8 153.1 Q41.9 158.2 38.9 159.5"/><path d="M59.0 62.6 Q55.4 65.2 49.6 65.0 Q46.8 58.5 42.4 60.1"/><path d="M18.9 6.1 Q23.9 7.4 28.8 6.6 Q32.3 13.7 33.9 12.6"/><path d="M188.1 136.3 Q191.6 132.9 192.2 129.9 Q192.4 124.6 194.5 123.1 Q195.9 117.9 201.8 118.3 Q205.6 113.9 206.2 112.0"/><path d="M52.9 138.0 Q49.7 137.5 43.0 136.7 Q35.0 139.4 33.2 138.0"/><path d="M41.0 129.0 Q48.0 128.7 49.2 125.1 Q53.6 123.5 59.2 124.3"/><path d="M103.2 84.3 Q107.9 83.2 109.4 78.8 Q105.1 74.2 107.1 72.0 Q105.0 67.3 100.0 67.1"/><path d="M5.4 48.7 Q1.5 47.2 -3.3 45.2 Q-4.9 38.3 -8.3 39.1 Q-8.3 36.2 -4.6 32.6"/><path d="M231.2 156.1 Q227.8 154.0 221.2 155.9 Q219.0 150.1 214.0 151.0 Q206.9 148.5 205.1 147.8"/><path d="M183.8 126.0 Q178.0 125.5 175.9 121.8 Q171.1 123.2 166.1 120.3"/><path d="M146.1 60.2 Q149.6 58.5 151.3 54.2 Q156.7 52.7 161.3 53.9"/><path d="M196.5 78.1 Q190.6 81.4 186.7 79.3 Q178.4 82.0 177.1 81.3 Q169.8 80.8 167.9 84.0 Q164.8 79.6 158.3 81.9"/><path d="M211.9 0.7 Q208.1 3.3 207.7 7.0 Q203.9 12.8 200.7 12.1 Q194.8 12.5 192.4 16.0"/><path d="M184.7 148.9 Q176.8 147.8 174.7 149.6 Q172.2 151.2 166.6 153.6 Q163.9 156.4 160.6 159.2"/><path d="M180.6 105.5 Q179.2 101.0 178.8 98.6 Q174.2 96.2 172.2 93.4 Q171.5 90.9 175.4 86.8 Q172.6 80.2 169.2 81.3"/><path d="M128.1 35.9 Q124.0 31.2 125.8 29.1 Q123.3 23.4 118.6 24.3"/><path d="M147.0 59.6 Q141.1 63.3 137.2 60.9 Q131.0 63.5 128.8 64.7"/><path d="M232.2 122.3 Q233.9 128.5 231.1 129.3 Q235.3 131.0 239.4 133.2 Q242.5 135.4 243.3 139.6 Q250.4 139.9 251.3 143.9"/><path d="M159.9 9.0 Q154.6 9.7 152.7 13.8 Q153.0 16.0 154.3 20.7 Q162.2 23.5 162.9 24.3 Q166.0 21.8 172.7 22.6"/><path d="M76.0 147.9 Q80.2 152.9 80.0 154.4 Q78.9 158.9 73.5 159.7"/><path d="M79.4 46.7 Q76.7 49.7 78.7 53.7 Q76.9 60.2 75.4 60.3"/><path d="M77.7 26.2 Q69.6 27.3 67.7 26.4 Q65.1 30.8 62.5 32.4"/><path d="M107.8 127.0 Q108.5 122.0 108.5 120.0 Q105.1 119.8 99.9 116.5"/><path d="M127.6 30.5 Q131.8 36.6 132.6 36.5 Q133.1 39.1 136.8 42.9 Q133.2 46.9 131.2 48.6"/><path d="M51.5 98.9 Q48.3 97.9 41.8 100.7 Q35.8 99.9 32.4 98.3 Q26.8 101.3 22.7 100.0 Q18.4 101.2 14.8 104.2"/><path d="M146.7 47.5 Q143.8 48.6 137.4 44.9 Q131.4 42.7 130.3 40.1 Q123.8 40.3 120.9 37.5 Q114.4 36.2 114.8 32.0"/><path d="M92.3 46.9 Q87.8 49.7 83.8 50.5 Q80.2 54.0 81.5 57.3"/><path d="M155.3 148.9 Q162.9 146.8 165.3 149.2 Q169.3 147.8 172.7 144.6 Q173.2 138.4 171.0 137.7"/><path d="M94.8 70.7 Q100.2 66.6 102.8 66.5 Q107.7 63.0 107.8 60.4"/><path d="M125.0 47.8 Q118.0 47.9 115.3 46.3 Q107.7 41.1 106.9 42.5 Q101.5 36.0 100.5 37.1"/><path d="M174.8 85.3 Q179.6 84.3 183.2 81.5 Q186.8 77.4 192.7 79.2"/><path d="M61.3 91.5 Q68.1 90.3 71.3 91.0 Q71.9 84.4 76.3 85.0"/><path d="M25.4 106.1 Q20.6 102.4 18.5 101.1 Q14.5 102.4 8.6 100.3"/><path d="M108.5 56.8 Q110.4 62.0 107.2 63.7 Q103.6 69.7 99.2 67.9 Q94.9 70.9 92.6 73.2 Q89.6 73.5 83.2 75.6"/><path d="M147.3 51.4 Q148.2 56.9 153.1 57.1 Q157.2 63.2 159.1 62.7 Q161.5 63.4 168.1 65.7 Q170.8 70.5 168.2 72.7"/><path d="M31.6 116.4 Q28.0 118.4 27.6 122.8 Q27.6 126.5 29.2 129.7 Q28.6 135.2 24.8 136.0"/><path d="M105.4 106.0 Q109.0 109.4 107.1 112.9 Q106.4 116.6 108.9 119.8 Q114.4 121.0 117.8 123.1 Q120.2 125.6 125.7 127.3"/><path d="M92.7 147.9 Q98.2 143.3 100.1 143.2 Q107.3 137.2 107.9 138.8"/><path d="M11.2 80.3 Q8.5 85.3 2.9 84.2 Q0.1 80.2 -6.2 81.3"/><path d="M181.6 112.0 Q186.8 108.3 189.3 107.5 Q198.2 107.6 199.2 108.1 Q204.0 106.8 209.2 107.9"/><path d="M203.7 42.9 Q212.2 46.4 212.9 45.6 Q216.6 42.6 222.6 44.1"/><path d="M165.1 57.5 Q165.0 62.1 160.5 63.8 Q162.0 69.2 163.4 70.5 Q158.3 71.9 156.9 75.8 Q155.4 77.0 151.0 81.4"/><path d="M216.2 77.7 Q207.4 74.7 206.2 77.3 Q200.6 71.2 200.1 71.7 Q199.3 66.1 198.0 64.9 Q201.6 63.5 206.2 60.9"/><path d="M231.4 141.2 Q235.6 142.6 241.3 140.5 Q247.9 139.2 250.8 142.8 Q256.4 146.8 257.1 148.2"/><path d="M178.1 127.7 Q178.0 120.9 176.6 120.7 Q172.8 118.5 169.2 116.0 Q161.9 118.1 159.9 118.7"/><path d="M211.5 35.2 Q216.7 41.3 218.6 40.2 Q223.6 38.8 228.5 39.4 Q236.2 38.4 236.6 35.3 Q238.8 35.0 245.1 31.5"/><path d="M172.8 138.5 Q171.5 143.4 167.0 144.2 Q162.4 146.1 157.1 145.3 Q152.7 147.2 147.1 145.0"/><path d="M152.7 74.9 Q160.8 72.0 162.5 73.5 Q165.2 72.6 170.8 69.6"/><path d="M191.3 91.9 Q185.4 93.2 185.1 97.4 Q183.7 100.5 186.5 104.3 Q189.0 104.6 195.2 107.7"/><path d="M226.6 55.7 Q233.3 55.9 235.6 52.7 Q239.8 52.0 245.3 54.4 Q247.9 57.6 252.6 59.2"/><path d="M52.8 118.0 Q55.5 123.4 55.7 124.7 Q58.2 128.1 58.3 131.4 Q60.2 135.8 64.2 137.1 Q68.9 142.7 68.9 143.3"/><path d="M202.1 63.2 Q201.3 61.1 205.1 56.6 Q210.9 54.8 210.2 50.5"/><path d="M229.6 78.0 Q226.7 79.2 219.8 79.5 Q211.5 79.6 209.9 79.1"/><path d="M60.4 55.1 Q57.4 49.7 53.0 50.4 Q52.5 44.1 47.3 44.6"/><path d="M171.2 105.2 Q168.6 102.7 165.0 99.7 Q160.1 95.4 157.7 94.9"/><path d="M44.4 151.0 Q41.8 153.9 40.9 157.5 Q35.0 159.4 33.7 162.4 Q33.3 169.3 28.5 168.4"/><path d="M90.0 148.6 Q86.9 151.9 81.1 151.9 Q75.3 158.2 75.6 157.7 Q81.0 160.0 81.0 163.6"/><path d="M66.4 106.9 Q73.2 104.3 76.4 107.1 Q85.2 106.4 86.4 106.8 Q92.0 100.2 92.7 101.4"/><path d="M223.8 33.7 Q221.5 37.2 224.6 40.7 Q218.8 45.1 218.3 46.2 Q216.3 48.2 212.6 51.9 Q205.8 53.9 202.8 50.9"/><path d="M52.0 38.8 Q59.3 33.1 59.3 34.0 Q63.0 29.5 66.3 29.0 Q70.3 25.1 71.5 23.0"/><path d="M175.7 151.5 Q181.0 150.0 185.6 150.6 Q189.1 153.1 193.7 154.7 Q197.6 158.6 200.1 160.1 Q207.0 158.9 210.1 160.3"/><path d="M225.8 33.5 Q231.5 36.4 235.8 34.3 Q241.2 39.4 243.3 38.8 Q240.9 40.9 244.2 45.8"/><path d="M179.8 27.8 Q179.3 31.3 183.4 34.3 Q182.6 36.4 186.1 41.0 Q190.6 45.3 195.5 43.4 Q201.4 44.8 205.5 43.0"/><path d="M77.8 91.0 Q84.7 91.2 87.0 93.8 Q90.6 88.7 95.9 90.7 Q100.8 90.3 103.8 86.3"/><path d="M112.9 142.9 Q120.1 145.5 122.9 143.6 Q128.2 141.9 130.4 139.1 Q138.8 141.9 139.7 141.7"/><path d="M173.9 15.6 Q178.2 19.5 179.4 21.4 Q184.5 20.8 189.4 21.4 Q192.2 19.5 198.3 18.1"/><path d="M56.2 97.7 Q54.7 104.1 50.6 103.5 Q44.4 103.4 41.8 106.7 Q35.6 111.9 35.1 111.9 Q30.4 111.4 25.2 112.9"/><path d="M95.4 20.7 Q89.4 25.5 89.9 26.6 Q90.6 33.8 91.8 33.4"/><path d="M14.6 47.4 Q8.5 46.9 4.7 46.4 Q-1.5 52.0 -2.7 51.0 Q-8.6 46.9 -12.2 48.9 Q-18.5 51.8 -22.2 49.2"/><path d="M54.7 55.9 Q55.4 58.3 55.5 62.9 Q56.3 66.8 61.8 68.4"/><path d="M66.9 120.4 Q68.1 117.9 72.8 114.8 Q78.6 114.7 82.6 113.4 Q90.5 114.5 91.2 117.0"/><path d="M8.5 27.7 Q13.8 24.0 13.3 21.6 Q18.1 16.5 18.4 15.6 Q17.3 8.3 19.1 8.6"/><path d="M23.2 86.2 Q20.1 79.7 19.9 79.6 Q21.0 75.2 23.2 73.0"/><path d="M143.0 29.4 Q145.7 24.1 142.9 22.4 Q141.7 19.4 137.7 16.4"/><path d="M90.1 3.6 Q86.9 4.6 80.1 3.8 Q76.3 5.1 73.4 9.0"/><path d="M96.8 152.0 Q97.2 157.8 99.7 158.7 Q107.4 158.4 108.2 162.3"/><path d="M234.2 25.3 Q239.1 22.2 241.1 20.2 Q246.0 20.0 251.0 19.2"/><path d="M60.6 70.6 Q62.4 67.3 61.4 63.6 Q63.0 56.9 61.1 56.6"/><path d="M150.0 131.6 Q155.2 135.1 156.1 137.1 Q152.4 144.7 152.8 143.7 Q150.6 148.0 148.2 149.9 Q140.2 148.7 138.3 150.9"/><path d="M19.5 107.8 Q18.0 102.7 16.7 101.1 Q13.9 94.0 17.1 94.1"/><path d="M165.3 129.1 Q159.7 128.2 158.4 124.0 Q152.5 121.3 152.6 118.3 Q150.9 112.0 146.8 112.6"/><path d="M175.0 155.1 Q170.9 155.8 165.4 157.1 Q163.5 163.0 160.0 163.0 Q158.7 167.1 162.5 169.7 Q158.6 176.8 159.7 176.5"/><path d="M197.8 7.4 Q196.0 12.2 197.5 14.4 Q199.3 21.6 198.6 21.4"/><path d="M185.9 0.8 Q192.8 -2.0 193.7 -3.6 Q196.4 -6.9 200.7 -8.6"/><path d="M185.6 102.2 Q193.5 103.1 194.5 105.4 Q192.3 111.9 194.1 112.4 Q199.5 116.2 202.6 116.2 Q201.4 123.5 204.0 123.1"/><path d="M122.9 103.1 Q121.5 108.8 122.9 110.1 Q125.0 113.0 124.3 117.0"/><path d="M64.1 106.1 Q61.1 101.3 56.6 101.4 Q54.5 93.5 56.0 94.5"/><path d="M68.0 9.7 Q71.2 11.2 78.0 9.3 Q85.0 5.2 87.7 7.6 Q94.1 4.9 96.3 4.0"/><path d="M203.3 14.0 Q202.7 17.9 198.8 20.3 Q199.9 24.5 202.6 26.7 Q200.8 32.1 202.1 33.7 Q202.8 38.7 202.8 40.7"/><path d="M184.0 50.8 Q180.5 53.5 176.5 55.3 Q169.8 60.2 169.3 60.2 Q169.2 62.8 170.6 67.2 Q177.7 70.1 180.1 69.4"/><path d="M17.9 71.7 Q19.6 65.0 24.0 66.1 Q27.1 62.2 29.9 60.5 Q28.5 58.6 24.9 54.4 Q21.5 56.6 15.0 54.4"/><path d="M125.7 16.1 Q118.9 18.8 118.0 20.5 Q113.4 23.9 112.6 26.4"/><path d="M138.6 23.3 Q135.9 27.2 131.7 28.4 Q127.5 31.3 121.7 28.3"/><path d="M179.4 150.2 Q183.9 156.0 183.1 156.7 Q183.3 161.3 188.1 162.8"/><path d="M14.1 107.4 Q15.7 113.1 15.3 114.3 Q11.2 118.9 12.1 121.0"/><path d="M102.3 134.0 Q102.4 136.8 104.9 140.8 Q109.7 144.1 114.6 142.4 Q119.7 144.5 121.9 147.2 Q125.5 151.2 126.9 153.2"/><path d="M81.7 38.3 Q77.7 40.5 71.7 38.5 Q64.1 41.1 61.8 39.5 Q55.3 39.6 53.6 35.5 Q48.8 39.7 44.1 37.7"/><path d="M85.7 75.2 Q82.1 71.6 76.0 73.4 Q75.9 66.8 74.5 66.5 Q80.4 61.5 82.4 62.3 Q82.4 59.5 84.6 55.4"/><path d="M201.7 69.3 Q209.1 70.5 211.5 70.4 Q212.8 71.5 217.8 75.8"/><path d="M62.6 26.8 Q67.3 25.2 72.4 28.3 Q80.7 30.3 81.7 30.9 Q87.6 28.9 90.3 27.3"/><path d="M211.0 122.2 Q205.2 118.7 204.2 117.1 Q201.1 119.0 194.7 119.3 Q188.9 121.0 189.9 125.5"/><path d="M172.9 134.6 Q175.0 128.1 174.8 127.8 Q180.8 123.4 182.5 123.3"/><path d="M167.6 84.8 Q170.4 89.5 175.9 88.6 Q177.1 93.9 174.0 95.5 Q174.3 100.0 174.4 102.5 Q182.2 107.7 182.8 106.3"/></g><g fill="none" stroke="#ffffff" stroke-opacity="0.6" stroke-width="0.9" stroke-linecap="round"><path d="M186.3 72.2 Q187.1 76.7 191.5 76.4 Q194.8 76.9 196.0 81.1"/><path d="M112.6 90.2 Q108.8 90.8 104.7 90.7 Q101.7 95.3 98.8 94.5 Q102.4 99.5 101.7 99.8 Q102.9 105.4 107.2 103.9"/><path d="M145.4 78.1 Q150.4 82.5 150.7 82.3 Q156.3 84.8 155.4 86.8 Q159.7 91.1 159.2 91.7"/><path d="M216.3 120.2 Q218.5 119.2 217.1 114.7 Q223.3 111.6 223.7 111.4"/><path d="M161.2 142.6 Q164.4 146.5 168.8 144.4 Q173.2 144.9 175.0 147.9 Q174.6 150.9 177.7 153.2"/><path d="M233.6 125.7 Q230.4 123.3 225.6 126.0 Q223.8 122.8 219.5 122.4 Q217.5 124.1 212.0 124.2 Q205.5 123.5 204.1 123.2"/><path d="M219.4 125.9 Q224.4 125.6 227.1 127.5 Q233.7 128.8 234.1 130.2"/><path d="M129.6 156.8 Q128.0 152.2 123.4 153.3 Q119.7 154.4 115.4 154.1"/><path d="M151.9 121.8 Q151.2 115.7 147.2 117.4 Q147.7 113.6 146.3 111.8 Q144.1 106.3 141.3 107.4"/><path d="M158.7 109.5 Q161.8 104.5 163.9 105.2 Q170.9 104.6 171.9 106.0 Q176.8 105.7 179.0 108.5 Q181.4 113.7 182.7 113.5"/><path d="M171.6 70.0 Q172.9 76.5 175.2 75.1 Q172.3 77.4 173.1 80.4"/><path d="M176.6 76.9 Q180.9 72.6 183.5 74.0 Q190.9 71.4 191.4 73.1"/><path d="M171.2 122.8 Q176.8 125.6 178.6 124.9 Q184.4 124.7 186.6 125.7 Q188.4 127.8 190.1 130.7 Q192.1 131.3 198.1 131.0"/><path d="M179.4 70.6 Q178.1 70.3 173.1 67.2 Q167.1 69.7 165.7 69.3"/><path d="M128.9 81.5 Q132.1 80.5 136.7 80.3 Q138.6 79.5 143.9 77.9 Q146.8 77.2 149.5 73.9 Q149.1 70.9 147.2 68.5"/><path d="M108.2 133.4 Q105.0 129.2 105.9 128.0 Q102.4 122.9 102.3 123.0"/><path d="M224.6 108.6 Q224.3 104.9 222.5 103.1 Q215.3 104.1 214.6 102.4 Q209.8 104.1 207.6 105.0 Q205.5 101.5 200.2 102.9"/><path d="M100.3 104.0 Q104.2 102.0 104.8 99.3 Q110.3 98.1 112.4 97.7 Q113.1 91.6 116.5 92.9"/><path d="M199.3 75.3 Q196.6 80.7 194.8 79.9 Q198.6 81.3 196.5 85.4"/><path d="M125.1 121.8 Q124.6 119.1 119.9 117.5 Q114.8 111.5 116.0 112.6"/><path d="M188.7 119.2 Q191.4 121.4 191.1 124.5 Q194.6 126.8 195.2 129.3 Q200.7 129.0 201.8 132.4"/><path d="M161.9 156.9 Q166.7 154.9 169.9 157.2 Q171.9 154.5 177.5 155.6"/><path d="M138.5 108.1 Q137.3 107.0 131.6 105.2 Q129.7 106.4 125.2 108.6 Q123.2 107.4 117.4 110.0"/><path d="M115.6 79.3 Q109.1 79.1 107.7 80.4 Q105.2 79.4 100.0 78.9 Q97.9 77.5 92.4 80.8"/><path d="M185.6 142.2 Q189.3 143.9 190.4 146.6 Q191.0 150.2 190.9 152.2 Q192.9 155.8 198.5 154.0"/><path d="M222.0 117.5 Q224.5 111.6 226.9 113.0 Q231.1 112.1 229.5 107.7 Q225.3 106.0 224.0 103.7 Q221.3 100.4 221.1 98.5"/><path d="M218.1 154.7 Q224.6 154.0 224.2 151.1 Q226.0 153.4 232.0 152.3"/><path d="M144.8 151.0 Q147.7 150.8 151.9 148.3 Q154.7 146.5 152.9 142.8 Q152.4 139.1 148.9 137.9 Q146.6 134.1 142.1 134.9"/><path d="M103.2 86.8 Q97.1 87.5 95.2 86.6 Q93.4 87.6 87.4 87.7"/><path d="M226.8 80.0 Q234.5 77.3 234.8 80.1 Q238.5 82.7 242.6 81.4"/><path d="M158.9 155.6 Q161.0 155.2 166.9 155.5 Q173.5 156.8 174.9 155.7 Q178.6 157.4 178.6 160.7 Q184.2 166.4 183.5 165.1"/><path d="M184.1 127.7 Q188.5 129.5 189.7 131.7 Q191.4 133.7 192.0 137.1 Q190.8 142.6 191.3 142.7"/><path d="M123.5 119.5 Q119.4 124.7 119.6 124.4 Q115.2 126.9 114.0 128.4"/><path d="M191.2 114.5 Q186.3 111.1 187.2 109.6 Q185.3 107.6 185.7 104.1 Q188.6 98.8 188.8 99.0 Q184.5 93.6 186.3 93.6"/><path d="M164.1 143.9 Q165.5 149.2 165.6 149.4 Q167.2 150.9 169.2 154.4 Q171.6 160.6 169.3 160.0"/><path d="M219.5 137.7 Q217.6 140.2 220.8 143.3 Q217.5 148.2 215.7 147.6 Q214.4 150.0 208.6 150.2 Q207.0 148.6 202.0 147.1"/><path d="M197.1 113.9 Q196.8 112.4 200.0 108.7 Q202.8 106.9 202.1 103.3 Q202.4 99.4 199.9 97.9 Q195.7 96.7 193.6 94.4"/><path d="M131.7 99.2 Q130.2 96.4 131.9 93.6 Q131.7 89.6 135.9 88.8"/><path d="M173.3 106.2 Q177.3 112.3 177.3 111.0 Q184.4 111.0 185.3 110.3 Q192.7 108.4 193.2 109.4"/><path d="M152.6 147.6 Q157.3 146.5 159.9 145.2 Q160.3 141.2 163.5 140.2 Q159.5 138.1 158.5 135.8 Q152.7 133.1 152.2 132.3"/></g></g>
<ellipse cx="117.8" cy="73.7" rx="53.6" ry="32" fill="url(#rg)"/>
<path d="M66 82 C80 104 156 104 170 82" fill="none" stroke="#4d8fc6" stroke-width="5" opacity=".5" filter="url(#b2)"/>
<ellipse cx="117.8" cy="71.4" rx="23.4" ry="8.6" fill="#32b3c8"/>
<path d="M94.500 71 C100 62.500 136 62.500 141.200 71" fill="none" stroke="#5d9ed0" stroke-width="2.400" opacity=".8" filter="url(#b2)"/>
<ellipse cx="100" cy="55" rx="14" ry="5" fill="#dbeaf8" opacity=".6" filter="url(#b2)"/>
<circle cx="156.400" cy="31.900" r="10.500" fill="url(#bg)"/>
</g></svg>
</div></div>

<div class="a" id="cpanel" style="left:855px;top:369px;width:280px;height:250px;background:#fff4ea;border:1px solid #efe0d4;border-radius:5px"></div>
<div class="a" style="left:871px;top:393px;width:248px;height:164px;background:#fff;border:1px solid #e6e8ee;border-radius:4px"></div>
<span class="t" id="t59" style="left:884.3px;top:411.01px;font:400 12.8px/1 'Liberation Sans', sans-serif;color:#2a2f3a;letter-spacing:0.160px;">admin</span>
<span class="t" id="t60" style="left:884.3px;top:433.01px;font:400 11.3px/1 'Liberation Sans', sans-serif;color:#9096a2;letter-spacing:-0.298px;">2025/09/12 17:34:37</span>
<div class="a" style="left:884px;top:456px;width:222px;height:1px;background:#e3e5ec"></div>
<div class="a" style="left:991.7px;top:577.6px;width:20.6px;height:20.6px;border-radius:50%;background:#fea33c;box-shadow:inset 0 0 0 0.6px #ee983a"></div>
<div class="a" style="left:1025.6px;top:577.6px;width:20.6px;height:20.6px;border-radius:50%;background:#ffe92a;box-shadow:inset 0 0 0 0.6px #f0da28"></div>
<div class="a" style="left:1059.6px;top:577.6px;width:20.6px;height:20.6px;border-radius:50%;background:#f66b66;box-shadow:inset 0 0 0 0.6px #e8625e"></div>
<div class="a" style="left:1093.9px;top:577.6px;width:20.2px;height:20.2px;border-radius:50%;background:radial-gradient(circle,#fff 0,rgba(255,255,255,.85) 18%,rgba(255,255,255,0) 68%),conic-gradient(from 0deg,#e8f000 0deg,#ffe800 12deg,#ff1212 62deg,#f0109a 100deg,#b414e0 140deg,#1414ff 185deg,#12baff 240deg,#12ffee 270deg,#22f060 318deg,#70f010 342deg,#e8f000 360deg)"></div>


<div class="a" id="menu" style="left:103px;top:65px;width:255.5px;height:324.5px;background:#fff;border:1px solid #e2e4e9;border-radius:7px;box-shadow:0 1px 5px rgba(0,0,0,.05);z-index:20"></div>
<div class="a" style="left:110px;top:354.5px;width:242px;height:28px;background:#f5f6f8;border-radius:4px;z-index:20"></div>
<div class="a" style="left:110px;top:184px;width:242px;height:1px;background:#e3e5eb;z-index:21"></div>
<div class="a" style="left:110px;top:213px;width:242px;height:1px;background:#e3e5eb;z-index:21"></div>
<div class="a" style="left:110px;top:326px;width:242px;height:1px;background:#e3e5eb;z-index:21"></div>
<span class="t" id="t61" style="left:158.6px;top:80.01px;font:400 13.9px/1 'Liberation Sans', sans-serif;color:#1a1d26;letter-spacing:-0.282px;z-index:21;">Page unique</span>
<span class="t" id="t62" style="left:158.6px;top:108.01px;font:400 13.9px/1 'Liberation Sans', sans-serif;color:#1a1d26;letter-spacing:-0.111px;z-index:21;">Défilement sur une seule page</span>
<span class="t" id="t63" style="left:158.6px;top:136.01px;font:400 13.9px/1 'Liberation Sans', sans-serif;color:#1a1d26;letter-spacing:-0.327px;z-index:21;">Deux pages</span>
<span class="t" id="t64" style="left:158.6px;top:164.01px;font:400 13.9px/1 'Liberation Sans', sans-serif;color:#1a1d26;letter-spacing:-0.095px;z-index:21;">Défilement de deux pages</span>
<span class="t" id="t65" style="left:158.6px;top:193.01px;font:400 13.9px/1 'Liberation Sans', sans-serif;color:#1a1d26;letter-spacing:0.013px;z-index:21;">Vue de couverture</span>
<span class="t" id="t66" style="left:158.6px;top:222.01px;font:400 13.9px/1 'Liberation Sans', sans-serif;color:#1a1d26;letter-spacing:-0.072px;z-index:21;">Ajuster à la hauteur</span>
<span class="t" id="t67" style="left:158.6px;top:250.01px;font:400 13.9px/1 'Liberation Sans', sans-serif;color:#1a1d26;letter-spacing:-0.142px;z-index:21;">Ajuster à la largeur</span>
<span class="t" id="t68" style="left:158.6px;top:278.01px;font:400 13.9px/1 'Liberation Sans', sans-serif;color:#1a1d26;letter-spacing:-0.358px;z-index:21;">Taille réelle</span>
<span class="t" id="t69" style="left:158.6px;top:306.01px;font:400 13.9px/1 'Liberation Sans', sans-serif;color:#1a1d26;letter-spacing:-0.063px;z-index:21;">Ajuster à la fenêtre</span>
<span class="t" id="t70" style="left:158.6px;top:335.01px;font:400 13.9px/1 'Liberation Sans', sans-serif;color:#1a1d26;letter-spacing:-0.340px;z-index:21;">Plein écran</span>
<span class="t" id="t71" style="left:158.6px;top:363.01px;font:400 13.9px/1 'Liberation Sans', sans-serif;color:#1a1d26;letter-spacing:-0.089px;z-index:21;">Arrière-plan</span>
<div class="a" style="left:130px;top:354px;width:134px;height:33px;border:3px solid #e8453c;border-radius:4.5px;z-index:22"></div>


<div class="a" id="submenu" style="left:349.3px;top:347.8px;width:176px;height:184px;background:#fff;border:1px solid #e6e8ec;border-radius:5px 5px 1.5px 4px;box-shadow:0 1px 5px rgba(0,0,0,.05);z-index:30"></div>
<span class="t" id="t72" style="left:384.1px;top:367.01px;font:400 12.8px/1 'Liberation Sans', sans-serif;color:#2e3340;letter-spacing:0.115px;z-index:31;">Par défaut</span>
<span class="t" id="t73" style="left:384.1px;top:401.01px;font:400 12.8px/1 'Liberation Sans', sans-serif;color:#2e3340;letter-spacing:-0.069px;z-index:31;">Jour</span>
<span class="t" id="t74" style="left:384.1px;top:435.01px;font:400 12.8px/1 'Liberation Sans', sans-serif;color:#2e3340;letter-spacing:0.411px;z-index:31;">Nuit</span>
<span class="t" id="t75" style="left:384.1px;top:469.01px;font:400 12.8px/1 'Liberation Sans', sans-serif;color:#2e3340;letter-spacing:0.066px;z-index:31;">Protection des yeux</span>
<span class="t" id="t76" style="left:384.1px;top:503.01px;font:400 12.8px/1 'Liberation Sans', sans-serif;color:#2e3340;letter-spacing:-0.134px;z-index:31;">Parchemin</span>
<div class="a" style="left:358.1px;top:356px;width:172px;height:180px;border:3.1px solid #e8453c;border-radius:4.5px;z-index:32"></div>

<svg style="left:19.05px;top:7.05px;" width="20" height="20" viewBox="0 0 20 20">
<defs><linearGradient id="lg1" x1="0" y1="0.35" x2="1" y2="0.65"><stop offset="0" stop-color="#3452f6"/><stop offset="0.55" stop-color="#2f6af8"/><stop offset="1" stop-color="#2e90fc"/></linearGradient></defs>
<rect x="0" y="0" width="20" height="19.85" rx="5" fill="url(#lg1)"/>
<path d="M9.5 12.4 C9.5 10 9.9 6.4 10.5 4.5 C11.6 3.1 14 3.1 15.2 4.3 C16.6 5.8 16.3 8.6 14.4 9.9 C12.5 11.1 9 10.7 6.6 11.5 C4 12.3 3.1 14 4 15.3 C5.2 16.9 8 16.3 9 14.3 C9.4 13.6 9.5 13 9.5 12.4 Z" fill="none" stroke="#fff" stroke-opacity=".96" stroke-width="1.75" stroke-linejoin="round"/>
</svg>
<svg style="left:71px;top:9px;" width="17" height="16" viewBox="0 0 17 16"><g fill="none" stroke="#2b303b" stroke-width="1.25" stroke-linejoin="round">
<path d="M4.6 4.6 V1.3 H11.9 V4.6"/><rect x="1.2" y="4.6" width="14" height="7.4" rx="1.6"/><rect x="4.4" y="9.2" width="7.6" height="5.6" fill="#e7e8ee"/></g></svg>
<svg style="left:101px;top:9px;" width="17" height="16" viewBox="0 0 17 16"><g fill="none" stroke="#2b303b" stroke-width="1.25" stroke-linecap="round" stroke-linejoin="round">
<path d="M4.4 2.4 L1.6 5.2 L4.4 8"/><path d="M1.8 5.2 H9.6 A4.1 4.1 0 0 1 9.6 13.4 H3.4"/></g></svg>
<svg style="left:131px;top:9px;" width="17" height="16" viewBox="0 0 17 16"><g fill="none" stroke="#c9ccd4" stroke-width="1.25" stroke-linecap="round" stroke-linejoin="round">
<path d="M12.6 2.4 L15.4 5.2 L12.6 8"/><path d="M15.2 5.2 H7.4 A4.1 4.1 0 0 0 7.4 13.4 H13.6"/></g></svg>
<svg style="left:164px;top:15.8px;" width="6" height="4" viewBox="0 0 6 4"><path d="M0.2 0.3 H5.6 L2.9 3.7 Z" fill="#596070"/></svg>
<svg style="left:366px;top:12px;" width="10" height="10" viewBox="0 0 10 10"><path d="M1 1 L9.2 9.2 M9.2 1 L1 9.2" stroke="#2b303b" stroke-width="0.95" fill="none"/></svg>
<svg style="left:406px;top:9.5px;" width="15" height="15" viewBox="0 0 15 15"><path d="M7.5 0.8 V14.2 M0.8 7.5 H14.2" stroke="#2b303b" stroke-width="1.3" fill="none"/></svg>
<div class="a" style="left:987.7px;top:4px;width:18.6px;height:18.6px;border-radius:50%;background:#4a7afb"></div>
<svg style="left:1037px;top:5.5px;" width="17" height="16" viewBox="0 0 17 16"><g fill="none" stroke="#2b303b" stroke-width="1.4" stroke-linecap="round">
<path d="M2.6 8 A5.6 6.2 0 0 1 13.8 8"/><path d="M13.9 9.6 C14 12.4 12 14 9.4 14.2"/></g>
<rect x="1" y="6.6" width="2.6" height="4.2" rx="1.2" fill="#2b303b"/><rect x="12.8" y="6.6" width="2.6" height="4.2" rx="1.2" fill="#2b303b"/></svg>
<svg style="left:1078px;top:5px;" width="16" height="16" viewBox="0 0 16 16"><path d="M0.6 4 H13.4 M0.6 8.5 H13.4 M0.6 13.4 H13.4" stroke="#2b303b" stroke-width="1.2" fill="none"/><circle cx="12" cy="3" r="3" fill="#f04438"/></svg>
<svg style="left:1118px;top:12.6px;" width="14" height="2" viewBox="0 0 14 2"><path d="M0.2 0.8 H13.6" stroke="#2b303b" stroke-width="1.2"/></svg>
<svg style="left:1158px;top:6.5px;" width="14" height="14" viewBox="0 0 14 14"><rect x="1.2" y="1.2" width="11.4" height="11.2" rx="1.6" fill="none" stroke="#2b303b" stroke-width="1.2"/></svg>
<svg style="left:1199px;top:7.5px;" width="12" height="12" viewBox="0 0 12 12"><path d="M1 1 L11 10.8 M11 1 L1 10.8" stroke="#2b303b" stroke-width="1.2" fill="none"/></svg>
<svg style="left:12.5px;top:46.5px;" width="13" height="13" viewBox="0 0 13 13"><path d="M0.6 1.5 H11.6 M0.6 6.5 H11.6 M0.6 11.4 H11.6" stroke="#2b303b" stroke-width="1.2" fill="none"/></svg>
<svg style="left:112.5px;top:45.5px;" width="18" height="18" viewBox="0 0 18 18"><g fill="none" stroke="#36404f" stroke-width="1.15" stroke-linejoin="round"><path d="M1.2 2 a1.2 1.2 0 0 1 1.2 -1.2 H9 L12.6 4.4 V13 a1.2 1.2 0 0 1 -1.2 1.2 H2.4 a1.2 1.2 0 0 1 -1.2 -1.2 Z"/><path d="M8.8 1 V4.6 H12.4" stroke-width="0.9"/><path d="M4.3 6.9 H9.9 M4.3 10 H9.9" stroke-width="1.1"/></g><path d="M15.9 14.2 V17.1 H13 Z" fill="#596070"/></svg>
<svg style="left:214px;top:53px;" width="6" height="4" viewBox="0 0 6 4"><path d="M0.2 0.3 H5.6 L2.9 3.5 Z" fill="#3a3f4b"/></svg>
<svg style="left:242px;top:44px;" width="18" height="18" viewBox="0 0 18 18"><g fill="none" stroke="#2b303b" stroke-width="1.3" stroke-linecap="round"><circle cx="8.6" cy="8.5" r="7.3"/><path d="M5.4 8.5 H11.8"/><path d="M14 14 L16 15.6"/></g></svg>
<svg style="left:278px;top:44px;" width="18" height="18" viewBox="0 0 18 18"><g fill="none" stroke="#2b303b" stroke-width="1.3" stroke-linecap="round"><circle cx="8.5" cy="8.5" r="7.3"/><path d="M5.3 8.5 H11.7 M8.5 5.3 V11.7"/><path d="M13.9 14 L15.9 15.6"/></g></svg>
<svg style="left:1086px;top:45px;" width="16" height="16" viewBox="0 0 16 16"><g fill="none" stroke="#3a3f4b" stroke-width="1.1"><circle cx="3.5" cy="7.8" r="2"/><circle cx="12.5" cy="3.4" r="2"/><circle cx="12.5" cy="12.1" r="2"/><path d="M5.3 6.9 L10.7 4.3 M5.3 8.7 L10.7 11.2"/></g></svg>
<svg style="left:1171px;top:45px;" width="20" height="16" viewBox="0 0 20 16"><path d="M5.2 13.7 C2.4 13.7 1.4 11.9 1.4 10.4 C1.4 8.8 2.6 7.6 4 7.2 C4.6 3.8 7.2 2.2 10 2.2 C12.8 2.2 15.4 3.8 16 7.2 C17.4 7.6 18.6 8.8 18.6 10.4 C18.6 11.9 17.6 13.7 14.8 13.7 Z" fill="none" stroke="#3d4656" stroke-width="1.9" stroke-linejoin="round"/>
<circle cx="7.2" cy="8.9" r="0.95" fill="#3d4656"/><circle cx="9.9" cy="8.9" r="0.95" fill="#3d4656"/><circle cx="12.6" cy="8.9" r="0.95" fill="#3d4656"/></svg>
<svg style="left:1203px;top:45px;" width="14" height="15" viewBox="0 0 14 15"><path d="M1 2.2 H12.8 M1 5.1 H12.8 M1.2 13.8 L6.9 9.7 L12.6 13.8" fill="none" stroke="#5a6070" stroke-width="1.1"/></svg>
<svg style="left:54px;top:81px;" width="21" height="22" viewBox="0 0 21 22"><path d="M6.2 12.6 V4.4 a1.45 1.45 0 0 1 2.9 0 V10 M9.1 9.6 V2.7 a1.45 1.45 0 0 1 2.9 0 V9.6 M12 9.8 V3.8 a1.45 1.45 0 0 1 2.9 0 V10.4 M14.9 10.4 V6.6 a1.4 1.4 0 0 1 2.8 0 V13.6 C17.7 18 15 20.2 11.4 20.2 C8 20.2 6.4 18.6 4.6 15.6 L2 11.4 a1.5 1.5 0 0 1 2.4 -1.8 L6.2 12.2" fill="none" stroke="#2b303b" stroke-width="1.5" stroke-linecap="round" stroke-linejoin="round"/></svg>
<svg style="left:100px;top:80px;" width="6" height="22" viewBox="0 0 6 22"><path d="M2.2 2 V20" stroke="#2b303b" stroke-width="1.6" stroke-linecap="round"/></svg>
<svg style="left:297.2px;top:81px;" width="24" height="23" viewBox="0 0 24 23"><g fill="none" stroke="#2b303b" stroke-width="1.5" stroke-linejoin="round" stroke-linecap="round"><path d="M1.8 16.2 V2.9 a1.2 1.2 0 0 1 1.2 -1.2 H15.6"/><rect x="4.9" y="4.9" width="16.6" height="16" rx="1.4" fill="#fff"/></g><text x="7.800000000000001" y="17" font-family="Liberation Sans, sans-serif" font-size="11.2" fill="#3d6ef0" stroke="#3d6ef0" stroke-width="0.2" textLength="11" lengthAdjust="spacingAndGlyphs">W</text></svg>
<svg style="left:414.2px;top:81px;" width="24" height="23" viewBox="0 0 24 23"><g fill="none" stroke="#2b303b" stroke-width="1.5" stroke-linejoin="round" stroke-linecap="round"><path d="M1.8 16.2 V2.9 a1.2 1.2 0 0 1 1.2 -1.2 H15.6"/><rect x="4.9" y="4.9" width="16.6" height="16" rx="1.4" fill="#fff"/></g><text x="9.200000000000001" y="17" font-family="Liberation Sans, sans-serif" font-size="11.2" fill="#3d6ef0" stroke="#3d6ef0" stroke-width="0.2" textLength="8.2" lengthAdjust="spacingAndGlyphs">E</text></svg>
<svg style="left:527.2px;top:81px;" width="24" height="23" viewBox="0 0 24 23"><g fill="none" stroke="#2b303b" stroke-width="1.5" stroke-linejoin="round" stroke-linecap="round"><path d="M1.8 16.2 V2.9 a1.2 1.2 0 0 1 1.2 -1.2 H15.6"/><rect x="4.9" y="4.9" width="16.6" height="16" rx="1.4" fill="#fff"/></g><text x="9.0" y="17" font-family="Liberation Sans, sans-serif" font-size="11.2" fill="#3d6ef0" stroke="#3d6ef0" stroke-width="0.2" textLength="8.6" lengthAdjust="spacingAndGlyphs">P</text></svg>
<svg style="left:691.2px;top:81px;" width="24" height="23" viewBox="0 0 24 23"><g fill="none" stroke="#2b303b" stroke-width="1.5" stroke-linejoin="round" stroke-linecap="round"><path d="M1.8 16.2 V2.9 a1.2 1.2 0 0 1 1.2 -1.2 H15.6"/><rect x="4.9" y="4.9" width="16.6" height="16" rx="1.4" fill="#fff"/></g><g fill="none" stroke="#3d6ef0" stroke-width="1.2" stroke-linejoin="round" stroke-linecap="round"><path d="M5.8 15.6 L11.4 12.6 L14.6 19.8"/><circle cx="15.2" cy="9.9" r="1.3"/></g></svg>
<svg style="left:810.9px;top:81px;" width="24" height="23" viewBox="0 0 24 23"><g fill="none" stroke="#2b303b" stroke-width="1.5" stroke-linejoin="round" stroke-linecap="round"><path d="M1.8 16.2 V2.9 a1.2 1.2 0 0 1 1.2 -1.2 H15.6"/><rect x="4.9" y="4.9" width="16.6" height="16" rx="1.4" fill="#fff"/></g><text x="8.200000000000001" y="17" font-family="Liberation Sans, sans-serif" font-size="11.2" fill="#3d6ef0" stroke="#3d6ef0" stroke-width="0.2" textLength="10.2" lengthAdjust="spacingAndGlyphs">A</text></svg>
<svg style="left:933.2px;top:81px;" width="24" height="23" viewBox="0 0 24 23"><g fill="none" stroke="#2b303b" stroke-width="1.5" stroke-linejoin="round" stroke-linecap="round"><path d="M1.8 16.2 V2.9 a1.2 1.2 0 0 1 1.2 -1.2 H15.6"/><rect x="4.9" y="4.9" width="16.6" height="16" rx="1.4" fill="#fff"/></g><g fill="#3d6ef0"><circle cx="8.8" cy="13" r="0.95"/><circle cx="13" cy="13" r="0.95"/><circle cx="17.2" cy="13" r="0.95"/></g></svg>
<svg style="left:1021.2px;top:81px;" width="24" height="23" viewBox="0 0 24 23"><g fill="none" stroke="#2b303b" stroke-width="1.5" stroke-linejoin="round" stroke-linecap="round"><path d="M1.8 16.2 V2.9 a1.2 1.2 0 0 1 1.2 -1.2 H15.6"/><rect x="4.9" y="4.9" width="16.6" height="16" rx="1.4" fill="#fff"/></g><g fill="none" stroke="#3d6ef0" stroke-width="1.2" stroke-linecap="round" stroke-linejoin="round"><path d="M8.2 11.3 H17.6 M15.4 9.2 L17.8 11.3"/><path d="M18 14.7 H8.6 M10.8 16.8 L8.4 14.7"/></g></svg>
<svg style="left:2.5px;top:136.5px;" width="18" height="19" viewBox="0 0 18 19"><g fill="none" stroke="#3a3f4b" stroke-width="1.15" stroke-linejoin="round"><path d="M2.2 0.9 H13 L16.2 3.8 V16.4 a1.2 1.2 0 0 1 -1.2 1.2 H2.2 a1.2 1.2 0 0 1 -1.2 -1.2 V2.1 a1.2 1.2 0 0 1 1.2 -1.2 Z"/><path d="M1 8.8 A9 9 0 0 1 9.8 17.6"/><circle cx="10.6" cy="6.5" r="1.2"/></g></svg>
<svg style="left:2.5px;top:179.5px;" width="17" height="20" viewBox="0 0 17 20"><path d="M2 1 H14 a1.1 1.1 0 0 1 1.1 1.1 V18.2 L8 13.8 L0.9 18.2 V2.1 A1.1 1.1 0 0 1 2 1 Z" fill="none" stroke="#3a3f4b" stroke-width="1.15" stroke-linejoin="round"/></svg>
<svg style="left:2px;top:226px;" width="19" height="17" viewBox="0 0 19 17"><g fill="none" stroke="#3a3f4b" stroke-width="1.15" stroke-linejoin="round" stroke-linecap="round"><path d="M2.4 0.9 H16.4 a1.3 1.3 0 0 1 1.3 1.3 V12.6 a1.3 1.3 0 0 1 -1.3 1.3 H4 L1.1 15.4 V2.2 a1.3 1.3 0 0 1 1.3 -1.3 Z"/><path d="M4.8 5.2 H13 M4.8 8.2 H8.8" stroke-width="1.2"/></g></svg>
<svg style="left:1195px;top:135px;" width="19" height="19" viewBox="0 0 19 19"><g fill="none" stroke="#2b303b" stroke-width="1.1" stroke-linecap="round"><rect x="1.1" y="1.1" width="16.7" height="16.6" rx="1.6"/><path d="M4.3 6.5 H14.8 M11.5 5 V8 M4.3 12.5 H14.8 M7 11 V14"/></g></svg>
<svg style="left:1195px;top:179px;" width="19" height="19" viewBox="0 0 19 19"><g fill="none" stroke="#2b303b" stroke-width="1.15" stroke-linecap="round"><circle cx="9.3" cy="8.8" r="7.6"/><path d="M14.6 14.4 L17.6 17.4"/></g></svg>
<svg style="left:1194px;top:222.6px;" width="24" height="22" viewBox="0 0 24 22"><defs><linearGradient id="aig" gradientUnits="userSpaceOnUse" x1="2" y1="2" x2="20" y2="21"><stop offset="0.1" stop-color="#22e0e6"/><stop offset="0.5" stop-color="#36a4f5"/><stop offset="1" stop-color="#2f5cf0"/></linearGradient></defs>
<text x="1.4" y="20.4" font-family="Liberation Sans, sans-serif" font-size="25" font-weight="400" fill="url(#aig)" stroke="url(#aig)" stroke-width="1.3" stroke-linejoin="round" textLength="20.6" lengthAdjust="spacingAndGlyphs">AI</text></svg>
<svg style="left:775.6px;top:515.6px;" width="19" height="19" viewBox="0 0 19 19"><path d="M2.4 0.5 H16.4 a1.8 1.8 0 0 1 1.8 1.8 V13.4 a1.8 1.8 0 0 1 -1.8 1.8 H5.2 L2.6 18 C1.4 18.2 0.5 17.4 0.5 16.2 V2.3 A1.8 1.8 0 0 1 2.4 0.5 Z" fill="#fca439"/><path d="M1.9 4.8 H14 M1.9 8.8 H8.2" stroke="#3d7be8" stroke-width="1.2" fill="none"/><rect x="0" y="0" width="18.8" height="18.6" fill="none" stroke="#b9bcc4" stroke-width="0.5" stroke-dasharray="2 1.5"/></svg>
<svg style="left:1115px;top:377px;" width="13" height="13" viewBox="0 0 13 13"><path d="M1 1 L11.4 11.4 M11.4 1 L1 11.4" fill="none" stroke="#6c7380" stroke-width="1.05"/></svg>
<svg style="left:874px;top:579px;" width="19" height="18" viewBox="0 0 19 18"><g fill="none" stroke="#e6dbd3" stroke-width="1.2" stroke-linejoin="round"><path d="M6 4.2 V1.8 H11.6 V4.2"/><path d="M1 4.4 H16.8 V7.4 H1 Z"/><path d="M2.6 7.6 V16.6 H15.2 V7.6"/><path d="M6.6 11 V16.4 M11.2 11 V16.4"/></g></svg>
<svg style="left:0px;top:0px;z-index:21;" width="1221" height="832" viewBox="0 0 1221 832"><path d="M138.3 79.8 H147.3 L150.9 83.39999999999999 V91.39999999999999 a1 1 0 0 1 -1 1 H138.3 a1 1 0 0 1 -1 -1 V80.8 a1 1 0 0 1 1 -1 Z" fill="none" stroke="#2b303b" stroke-width="1.2" stroke-linejoin="round"/><path d="M147.3 79.8 V83.39999999999999 H150.9" fill="none" stroke="#3d6ef0" stroke-width="1.1" stroke-linejoin="round"/><path d="M113.2 114.6 L117.7 119 L126.9 109.2" fill="none" stroke="#4a4f5a" stroke-width="1.2"/><path d="M137.3 107.2 V109.8 H150.9 V107.2" fill="none" stroke="#2b303b" stroke-width="1.2" stroke-linejoin="round"/><path d="M137.3 120.8 V114.6 a1 1 0 0 1 1 -1 H147.9 L150.9 116.6 V120.8" fill="none" stroke="#2b303b" stroke-width="1.2" stroke-linejoin="round"/><path d="M147.9 113.6 V116.6 H150.9" fill="none" stroke="#3d6ef0" stroke-width="1.1" stroke-linejoin="round"/><path d="M137.6 136 H140.2 L142.6 138.4 V147.2 a1 1 0 0 1 -1 1 H137.6 a1 1 0 0 1 -1 -1 V137 a1 1 0 0 1 1 -1 Z" fill="none" stroke="#2b303b" stroke-width="1.2" stroke-linejoin="round"/><path d="M140.2 136 V138.4 H142.6" fill="none" stroke="#3d6ef0" stroke-width="1.1" stroke-linejoin="round"/><path d="M146.6 136 H149.2 L151.6 138.4 V147.2 a1 1 0 0 1 -1 1 H146.6 a1 1 0 0 1 -1 -1 V137 a1 1 0 0 1 1 -1 Z" fill="none" stroke="#2b303b" stroke-width="1.2" stroke-linejoin="round"/><path d="M149.2 136 V138.4 H151.6" fill="none" stroke="#3d6ef0" stroke-width="1.1" stroke-linejoin="round"/><path d="M136.6 163.5 V166.2 H142.6 V163.5" fill="none" stroke="#2b303b" stroke-width="1.2" stroke-linejoin="round"/><path d="M145.6 163.5 V166.2 H151.6 V163.5" fill="none" stroke="#2b303b" stroke-width="1.2" stroke-linejoin="round"/><path d="M136.6 176.8 V170.8 a1 1 0 0 1 1 -1 H140.2 L142.6 172.20000000000002 V176.8" fill="none" stroke="#2b303b" stroke-width="1.2" stroke-linejoin="round"/><path d="M140.2 169.8 V172.20000000000002 H142.6" fill="none" stroke="#3d6ef0" stroke-width="1.1" stroke-linejoin="round"/><path d="M145.6 176.8 V170.8 a1 1 0 0 1 1 -1 H149.2 L151.6 172.20000000000002 V176.8" fill="none" stroke="#2b303b" stroke-width="1.2" stroke-linejoin="round"/><path d="M149.2 169.8 V172.20000000000002 H151.6" fill="none" stroke="#3d6ef0" stroke-width="1.1" stroke-linejoin="round"/><path d="M136.4 205.4 H142.8" stroke="#2b303b" stroke-width="1.2"/><path d="M146.6 192.6 H149.2 L151.6 195.0 V204.4 a1 1 0 0 1 -1 1 H146.6 a1 1 0 0 1 -1 -1 V193.6 a1 1 0 0 1 1 -1 Z" fill="none" stroke="#2b303b" stroke-width="1.2" stroke-linejoin="round"/><path d="M149.2 192.6 V195.0 H151.6" fill="none" stroke="#3d6ef0" stroke-width="1.1" stroke-linejoin="round"/><path d="M137.4 225.6 V223.2 a1 1 0 0 1 1 -1 H140.8 M147.4 222.2 H149.8 a1 1 0 0 1 1 1 V225.6 M150.8 230.99999999999997 V233.39999999999998 a1 1 0 0 1 -1 1 H147.4 M140.8 234.39999999999998 H138.4 a1 1 0 0 1 -1 -1 V230.99999999999997" fill="none" stroke="#2b303b" stroke-width="1.2" stroke-linecap="round"/><path d="M144.1 224.2 V232.4 M142.3 226 L144.1 224.1 L145.9 226 M142.3 230.6 L144.1 232.5 L145.9 230.6" fill="none" stroke="#3d6ef0" stroke-width="1.05"/><path d="M137.4 253.4 V251 a1 1 0 0 1 1 -1 H140.8 M147.4 250 H149.8 a1 1 0 0 1 1 1 V253.4 M150.8 258.8 V261.2 a1 1 0 0 1 -1 1 H147.4 M140.8 262.2 H138.4 a1 1 0 0 1 -1 -1 V258.8" fill="none" stroke="#2b303b" stroke-width="1.2" stroke-linecap="round"/><path d="M140.2 256 H148 M141.9 254.3 L140.2 256 L141.9 257.7 M146.3 254.3 L148 256 L146.3 257.7" fill="none" stroke="#3d6ef0" stroke-width="1"/><path d="M137.4 281.2 V278.8 a1 1 0 0 1 1 -1 H140.8 M147.4 277.8 H149.8 a1 1 0 0 1 1 1 V281.2 M150.8 286.6 V289.0 a1 1 0 0 1 -1 1 H147.4 M140.8 290.0 H138.4 a1 1 0 0 1 -1 -1 V286.6" fill="none" stroke="#2b303b" stroke-width="1.2" stroke-linecap="round"/><text x="139.7" y="288.2" font-family="Liberation Serif, serif" font-size="11.8" fill="#3d6ef0" stroke="#3d6ef0" stroke-width="0.3" textLength="8.8" lengthAdjust="spacingAndGlyphs">1:1</text><path d="M137.4 309.0 V306.6 a1 1 0 0 1 1 -1 H140.8 M147.4 305.6 H149.8 a1 1 0 0 1 1 1 V309.0 M150.8 314.6 V317.0 a1 1 0 0 1 -1 1 H147.4 M140.8 318.0 H138.4 a1 1 0 0 1 -1 -1 V314.6" fill="none" stroke="#2b303b" stroke-width="1.2" stroke-linecap="round"/><rect x="141.3" y="309.2" width="5.5" height="5.3" rx="1.2" fill="none" stroke="#3d6ef0" stroke-width="1.1"/><path d="M137.4 337.79999999999995 V335.4 a1 1 0 0 1 1 -1 H140.8 M147.4 334.4 H149.8 a1 1 0 0 1 1 1 V337.79999999999995 M150.8 343.8 V346.2 a1 1 0 0 1 -1 1 H147.4 M140.8 347.2 H138.4 a1 1 0 0 1 -1 -1 V343.8" fill="none" stroke="#2b303b" stroke-width="1.2" stroke-linecap="round"/><path d="M140.4 344.2 L147.8 337.2 M144.6 337 H148 V340.4 M143.6 344.4 H140.2 V341" fill="none" stroke="#3d6ef0" stroke-width="1"/><path d="M136 368.8 C139 361.4 148.6 361.4 151.6 368.8 C148.6 376.2 139 376.2 136 368.8 Z" fill="none" stroke="#4a4f5a" stroke-width="1.2"/><circle cx="143.8" cy="368.8" r="2.5" fill="none" stroke="#3d6ef0" stroke-width="1.2"/><path d="M339.4 363.6 L344.8 369 L339.4 374.4" fill="none" stroke="#6b7280" stroke-width="1.2"/></svg>
<svg style="left:0px;top:0px;z-index:31;" width="1221" height="832" viewBox="0 0 1221 832"><path d="M360.6 406.9 L363.8 410.6 L372.8 401.2" fill="none" stroke="#4a4f5a" stroke-width="1.2"/></svg>
<span class="t" id="t77" style="left:994.2px;top:8.00px;font:700 11px/1 'Liberation Sans', sans-serif;color:#fff;letter-spacing:0.000px;">c</span>
</body></html>
